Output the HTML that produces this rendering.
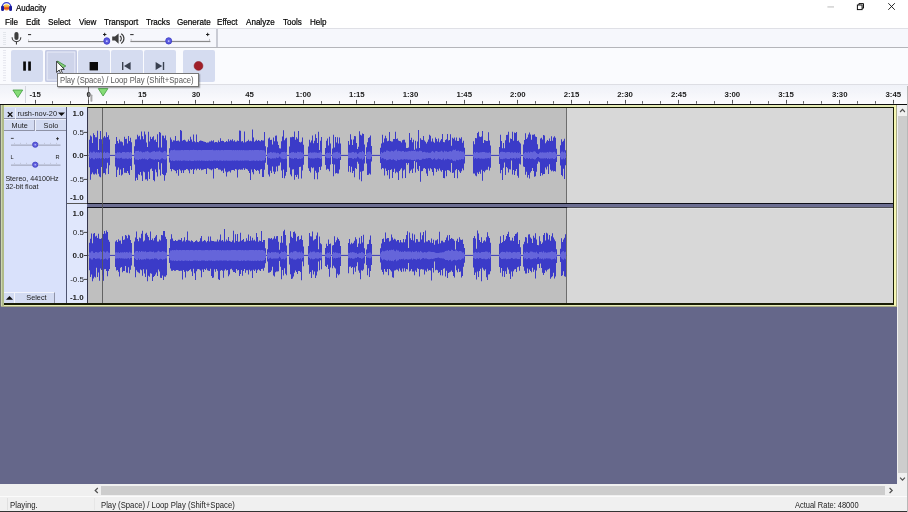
<!DOCTYPE html>
<html><head><meta charset="utf-8"><title>Audacity</title>
<style>
html,body{margin:0;padding:0}
body{width:908px;height:512px;overflow:hidden;background:#fff;position:relative;font-family:"Liberation Sans",sans-serif;color:#000}
.a{position:absolute}
.t{position:absolute;white-space:nowrap;line-height:1}
#title{left:15.5px;top:3.5px;font-size:8.6px;color:#000;-webkit-text-stroke:0.2px #000;transform:scaleX(.918);transform-origin:0 0}
.menu{top:17.7px;font-size:8.6px;color:#000;-webkit-text-stroke:0.2px #000;transform:scaleX(.94);transform-origin:0 0}
.btn{position:absolute;top:50px;height:32px;width:31.5px;background:#d5dcf0;border-radius:2px}
svg{position:absolute;left:0;top:0}
svg text{font-family:"Liberation Sans",sans-serif}
#root{position:absolute;left:0;top:0;width:908px;height:512px;overflow:hidden;will-change:transform;background:#fff}
</style></head><body><div id="root">

<!-- title bar -->
<svg width="908" height="16" viewBox="0 0 908 16">
 <defs><linearGradient id="ag" x1="0" y1="0" x2="0" y2="1"><stop offset="0" stop-color="#fbe060"/><stop offset="0.45" stop-color="#f6a030"/><stop offset="0.62" stop-color="#d42420"/><stop offset="0.78" stop-color="#ee7a28"/><stop offset="1" stop-color="#f4a040"/></linearGradient></defs>
 <circle cx="6.55" cy="7.3" r="3.1" fill="url(#ag)"/>
 <path d="M2.3 8 V6.9 A4.25 4.3 0 0 1 10.8 6.9 V8" fill="none" stroke="#3a40cc" stroke-width="1.3"/>
 <rect x="1.1" y="5.7" width="2.9" height="5.3" rx="1.3" fill="#1a1a9c"/>
 <rect x="9.1" y="5.7" width="2.9" height="5.3" rx="1.3" fill="#1a1a9c"/>
 <rect x="827.4" y="6.5" width="6.6" height="0.9" fill="#b4b4b4"/>
 <rect x="857.4" y="5" width="4.7" height="4.6" fill="none" stroke="#111" stroke-width="1"/>
 <path d="M858.9 5 V3.6 H863.5 V8.2 H862.1" fill="none" stroke="#111" stroke-width="1"/>
 <path d="M888.3 3.2 L894.8 9.8 M894.8 3.2 L888.3 9.8" stroke="#111" stroke-width="0.9" fill="none"/>
</svg>
<div class="t" id="title">Audacity</div>

<!-- menu -->
<div class="t menu" style="left:4.6px">File</div>
<div class="t menu" style="left:26px">Edit</div>
<div class="t menu" style="left:48px">Select</div>
<div class="t menu" style="left:79px">View</div>
<div class="t menu" style="left:104px">Transport</div>
<div class="t menu" style="left:146px">Tracks</div>
<div class="t menu" style="left:176.5px">Generate</div>
<div class="t menu" style="left:217px">Effect</div>
<div class="t menu" style="left:246px">Analyze</div>
<div class="t menu" style="left:283px">Tools</div>
<div class="t menu" style="left:310px">Help</div>

<!-- toolbar area -->
<div class="a" style="left:0;top:29px;width:908px;height:19px;background:#f6f7fc"></div>
<div class="a" style="left:0;top:48px;width:908px;height:38px;background:#fafbfe"></div>
<div class="a" style="left:0;top:28.2px;width:908px;height:0.8px;background:#dfe0e6"></div>
<div class="a" style="left:0;top:47.1px;width:908px;height:0.9px;background:#b4b5ba"></div>
<div class="a" style="left:215.5px;top:29.2px;width:0.7px;height:17.9px;background:#c9cbd4"></div>
<div class="a" style="left:217.1px;top:29.2px;width:0.7px;height:17.9px;background:#c9cbd4"></div>
<div class="a" style="left:0;top:84px;width:908px;height:0.9px;background:#dddee4"></div>

<!-- mixer toolbar -->
<svg width="230" height="48" viewBox="0 0 230 48">
 <g fill="#dcdee6"><rect x="3" y="32.0" width="3" height="0.7"/><rect x="3" y="34.0" width="3" height="0.7"/><rect x="3" y="36.0" width="3" height="0.7"/><rect x="3" y="38.0" width="3" height="0.7"/><rect x="3" y="40.0" width="3" height="0.7"/><rect x="3" y="42.0" width="3" height="0.7"/><rect x="3" y="44.0" width="3" height="0.7"/></g>
 <rect x="14.4" y="31.9" width="4.1" height="8.2" rx="2.05" fill="#3e3e3e"/>
 <path d="M12.1 37.3 A4.35 4.4 0 0 0 20.8 37.3" fill="none" stroke="#3e3e3e" stroke-width="1.1"/>
 <rect x="15.9" y="41.5" width="1.1" height="3" fill="#3e3e3e"/>
 <rect x="28" y="34.2" width="3.1" height="0.9" fill="#111"/>
 <rect x="103" y="34" width="3.4" height="0.9" fill="#111"/><rect x="104.25" y="32.8" width="0.9" height="3.3" fill="#111"/>
 <rect x="28" y="41.1" width="81.6" height="1" fill="#747474"/>
 <rect x="28" y="42.1" width="81.6" height="0.6" fill="#e2e2e6"/>
 <rect x="28" y="39.4" width="0.6" height="1.7" fill="#b0b0b0"/><rect x="109" y="39.4" width="0.6" height="1.7" fill="#b0b0b0"/>
 <ellipse cx="106.8" cy="41" rx="3" ry="3.3" fill="#5c5ce0" stroke="#3a3ac4" stroke-width="0.8"/>
 <circle cx="106.8" cy="41.2" r="0.9" fill="#c8c8ff"/>
 <path d="M112.2 36.6 H115 L118.6 33.4 V43.8 L115 40.6 H112.2 Z" fill="#3e3e3e"/>
 <path d="M120 36 A3.2 3.2 0 0 1 120 41.2" fill="none" stroke="#3e3e3e" stroke-width="1.2"/>
 <path d="M121.2 33.8 A5.6 5.6 0 0 1 121.2 43.4" fill="none" stroke="#3e3e3e" stroke-width="1.2"/>
 <rect x="130.2" y="34.2" width="3.4" height="0.9" fill="#111"/>
 <rect x="206" y="34" width="3.4" height="0.9" fill="#111"/><rect x="207.25" y="32.8" width="0.9" height="3.3" fill="#111"/>
 <rect x="130.4" y="40.9" width="80" height="1" fill="#747474"/>
 <rect x="130.4" y="41.9" width="80" height="0.6" fill="#e2e2e6"/>
 <rect x="130.8" y="38.9" width="0.6" height="2" fill="#a0a0a0"/><rect x="209.4" y="38.9" width="0.6" height="2" fill="#a0a0a0"/>
 <ellipse cx="168.7" cy="40.9" rx="3" ry="3.2" fill="#5c5ce0" stroke="#3a3ac4" stroke-width="0.8"/>
 <circle cx="168.7" cy="41.1" r="0.9" fill="#c8c8ff"/>
</svg>

<!-- transport -->
<div class="btn" style="left:11.3px"></div>
<div class="btn" style="left:45.2px;background:#ced4ea;box-shadow:inset 0 0 0 1.6px #c3c9e3, inset 0 0 0 2.6px #e9ecf8"></div>
<div class="btn" style="left:78.2px"></div>
<div class="btn" style="left:111.2px"></div>
<div class="btn" style="left:144.2px"></div>
<div class="btn" style="left:183.2px"></div>
<svg width="230" height="90" viewBox="0 0 230 90">
 <g fill="#e0e2ea"><rect x="3" y="50" width="3" height="0.8"/><rect x="3" y="52.5" width="3" height="0.8"/><rect x="3" y="55" width="3" height="0.8"/><rect x="3" y="57.5" width="3" height="0.8"/><rect x="3" y="60" width="3" height="0.8"/><rect x="3" y="62.5" width="3" height="0.8"/><rect x="3" y="65" width="3" height="0.8"/><rect x="3" y="67.5" width="3" height="0.8"/><rect x="3" y="70" width="3" height="0.8"/><rect x="3" y="72.5" width="3" height="0.8"/><rect x="3" y="75" width="3" height="0.8"/><rect x="3" y="77.5" width="3" height="0.8"/><rect x="3" y="80" width="3" height="0.8"/></g>
 <rect x="23.2" y="61.5" width="2.7" height="9.2" fill="#0a0a0a"/><rect x="28.2" y="61.5" width="2.7" height="9.2" fill="#0a0a0a"/>
 <path d="M57.5 61 L65.8 66 L57.5 71 Z" fill="#86cf7a" stroke="#3a8a3a" stroke-width="0.8"/>
 <rect x="89.6" y="62" width="8.4" height="8.4" fill="#0a0a0a"/>
 <rect x="122" y="62" width="1.4" height="8" fill="#3a4150"/><path d="M130.6 62 V70 L124 66 Z" fill="#3a4150"/>
 <path d="M155.6 62 V70 L162.2 66 Z" fill="#3a4150"/><rect x="162.8" y="62" width="1.4" height="8" fill="#3a4150"/>
 <circle cx="198.5" cy="65.9" r="4.4" fill="#a01f28" stroke="#8a1a22" stroke-width="0.6"/>
 <!-- mouse cursor -->
 <path d="M56.6 61.3 V72.4 L59.2 70 L61 74.2 L62.6 73.5 L60.8 69.4 H64.4 Z" fill="#fff" stroke="#111" stroke-width="0.8" stroke-linejoin="round"/>
</svg>
<!-- tooltip -->
<div class="a" style="left:56.5px;top:73px;width:142px;height:14px;background:#fff;border:1px solid #767676;box-sizing:border-box;box-shadow:0.8px 0.8px 1.2px rgba(0,0,0,.35);z-index:5"></div>
<div class="t" style="left:60.4px;top:75.6px;font-size:8.6px;color:#575757;transform:scaleX(.895);transform-origin:0 0;z-index:6">Play (Space) / Loop Play (Shift+Space)</div>

<!-- ruler -->
<div class="a" style="left:0;top:85px;width:908px;height:19px;background:linear-gradient(#f0f2f8,#f4f5fa 40%,#fcfcfe)"></div>
<div class="a" style="left:25.4px;top:85.5px;width:0.9px;height:17.7px;background:#d4d6de"></div>
<div class="a" style="left:0;top:103.5px;width:907px;height:1.6px;background:#0c0c0c"></div>
<svg width="908" height="106" viewBox="0 0 908 106" font-size="7.8" font-weight="bold" fill="#1c1c1c">
<rect x="35.1" y="99.9" width="0.8" height="3.8" fill="#2a2a2a"/>
<text x="35.1" y="97" text-anchor="middle">-15</text>
<rect x="52.1" y="101.1" width="0.8" height="2.6" fill="#3a3a3a"/>
<rect x="70.1" y="101.1" width="0.8" height="2.6" fill="#3a3a3a"/>
<rect x="88.1" y="99.9" width="0.8" height="3.8" fill="#2a2a2a"/>
<text x="88.7" y="97" text-anchor="middle">0</text>
<rect x="106.1" y="101.1" width="0.8" height="2.6" fill="#3a3a3a"/>
<rect x="124.1" y="101.1" width="0.8" height="2.6" fill="#3a3a3a"/>
<rect x="142.1" y="99.9" width="0.8" height="3.8" fill="#2a2a2a"/>
<text x="142.3" y="97" text-anchor="middle">15</text>
<rect x="160.1" y="101.1" width="0.8" height="2.6" fill="#3a3a3a"/>
<rect x="178.1" y="101.1" width="0.8" height="2.6" fill="#3a3a3a"/>
<rect x="195.1" y="99.9" width="0.8" height="3.8" fill="#2a2a2a"/>
<text x="196.0" y="97" text-anchor="middle">30</text>
<rect x="213.1" y="101.1" width="0.8" height="2.6" fill="#3a3a3a"/>
<rect x="231.1" y="101.1" width="0.8" height="2.6" fill="#3a3a3a"/>
<rect x="249.1" y="99.9" width="0.8" height="3.8" fill="#2a2a2a"/>
<text x="249.6" y="97" text-anchor="middle">45</text>
<rect x="267.1" y="101.1" width="0.8" height="2.6" fill="#3a3a3a"/>
<rect x="285.1" y="101.1" width="0.8" height="2.6" fill="#3a3a3a"/>
<rect x="303.1" y="99.9" width="0.8" height="3.8" fill="#2a2a2a"/>
<text x="303.3" y="97" text-anchor="middle">1:00</text>
<rect x="321.1" y="101.1" width="0.8" height="2.6" fill="#3a3a3a"/>
<rect x="339.1" y="101.1" width="0.8" height="2.6" fill="#3a3a3a"/>
<rect x="356.1" y="99.9" width="0.8" height="3.8" fill="#2a2a2a"/>
<text x="356.9" y="97" text-anchor="middle">1:15</text>
<rect x="374.1" y="101.1" width="0.8" height="2.6" fill="#3a3a3a"/>
<rect x="392.1" y="101.1" width="0.8" height="2.6" fill="#3a3a3a"/>
<rect x="410.1" y="99.9" width="0.8" height="3.8" fill="#2a2a2a"/>
<text x="410.5" y="97" text-anchor="middle">1:30</text>
<rect x="428.1" y="101.1" width="0.8" height="2.6" fill="#3a3a3a"/>
<rect x="446.1" y="101.1" width="0.8" height="2.6" fill="#3a3a3a"/>
<rect x="464.1" y="99.9" width="0.8" height="3.8" fill="#2a2a2a"/>
<text x="464.2" y="97" text-anchor="middle">1:45</text>
<rect x="482.1" y="101.1" width="0.8" height="2.6" fill="#3a3a3a"/>
<rect x="499.1" y="101.1" width="0.8" height="2.6" fill="#3a3a3a"/>
<rect x="517.1" y="99.9" width="0.8" height="3.8" fill="#2a2a2a"/>
<text x="517.8" y="97" text-anchor="middle">2:00</text>
<rect x="535.1" y="101.1" width="0.8" height="2.6" fill="#3a3a3a"/>
<rect x="553.1" y="101.1" width="0.8" height="2.6" fill="#3a3a3a"/>
<rect x="571.1" y="99.9" width="0.8" height="3.8" fill="#2a2a2a"/>
<text x="571.5" y="97" text-anchor="middle">2:15</text>
<rect x="589.1" y="101.1" width="0.8" height="2.6" fill="#3a3a3a"/>
<rect x="607.1" y="101.1" width="0.8" height="2.6" fill="#3a3a3a"/>
<rect x="625.1" y="99.9" width="0.8" height="3.8" fill="#2a2a2a"/>
<text x="625.1" y="97" text-anchor="middle">2:30</text>
<rect x="642.1" y="101.1" width="0.8" height="2.6" fill="#3a3a3a"/>
<rect x="660.1" y="101.1" width="0.8" height="2.6" fill="#3a3a3a"/>
<rect x="678.1" y="99.9" width="0.8" height="3.8" fill="#2a2a2a"/>
<text x="678.7" y="97" text-anchor="middle">2:45</text>
<rect x="696.1" y="101.1" width="0.8" height="2.6" fill="#3a3a3a"/>
<rect x="714.1" y="101.1" width="0.8" height="2.6" fill="#3a3a3a"/>
<rect x="732.1" y="99.9" width="0.8" height="3.8" fill="#2a2a2a"/>
<text x="732.4" y="97" text-anchor="middle">3:00</text>
<rect x="750.1" y="101.1" width="0.8" height="2.6" fill="#3a3a3a"/>
<rect x="768.1" y="101.1" width="0.8" height="2.6" fill="#3a3a3a"/>
<rect x="786.1" y="99.9" width="0.8" height="3.8" fill="#2a2a2a"/>
<text x="786.0" y="97" text-anchor="middle">3:15</text>
<rect x="803.1" y="101.1" width="0.8" height="2.6" fill="#3a3a3a"/>
<rect x="821.1" y="101.1" width="0.8" height="2.6" fill="#3a3a3a"/>
<rect x="839.1" y="99.9" width="0.8" height="3.8" fill="#2a2a2a"/>
<text x="839.7" y="97" text-anchor="middle">3:30</text>
<rect x="857.1" y="101.1" width="0.8" height="2.6" fill="#3a3a3a"/>
<rect x="875.1" y="101.1" width="0.8" height="2.6" fill="#3a3a3a"/>
<rect x="893.1" y="99.9" width="0.8" height="3.8" fill="#2a2a2a"/>
<text x="893.3" y="97" text-anchor="middle">3:45</text>
 <rect x="88.3" y="86.6" width="0.7" height="17" fill="#444"/>
 <path d="M12.9 90 H22.7 L17.8 97.5 Z" fill="#84dc76" stroke="#3f9a3c" stroke-width="0.8"/>
 <path d="M98.3 88.6 H107.9 L103.1 96 Z" fill="#84dc76" stroke="#3f9a3c" stroke-width="0.8"/>
 <rect x="90.4" y="94.5" width="2" height="7.2" rx="0.8" fill="#8c8c8c" opacity=".75"/>
</svg>

<!-- empty area -->
<div class="a" style="left:0;top:105px;width:896.7px;height:379.3px;background:#65678a"></div>

<!-- track -->
<div class="a" style="left:0;top:105px;width:1px;height:201.4px;background:#73756f"></div>
<div class="a" style="left:0.9px;top:105px;width:895.8px;height:201.5px;background:#a9ab86"></div>
<div class="a" style="left:0.9px;top:105px;width:894.9px;height:201.2px;background:#e6ecb6"></div>
<div class="a" style="left:0.9px;top:105px;width:1px;height:201.2px;background:#ccd6b2"></div>
<div class="a" style="left:1.9px;top:105px;width:2.1px;height:201.2px;background:#b0bb8a"></div>
<div class="a" style="left:893.9px;top:105px;width:1.9px;height:201.2px;background:#f5f6b2"></div>
<div class="a" style="left:4px;top:107px;width:889.9px;height:197.7px;background:#181c04"></div>
<div class="a" style="left:4px;top:107.4px;width:62.8px;height:195.8px;background:#d9e1fb"></div>
<!-- vruler -->
<div class="a" style="left:66.3px;top:107.4px;width:21px;height:195.8px;background:#e0e7fc;border-left:1px solid #4e5470;box-sizing:border-box"></div>
<!-- wave bg -->
<div class="a" style="left:87.3px;top:108px;width:805.6px;height:195.2px;background:#d8d8d8"></div>
<div class="a" style="left:87.3px;top:108px;width:479.2px;height:195.2px;background:#bfbfbf"></div>
<div class="a" style="left:566.3px;top:108px;width:0.9px;height:195.2px;background:#6d6d6d"></div>
<div class="a" style="left:87.3px;top:107.4px;width:1.1px;height:195.8px;background:#33334a"></div>
<!-- separator -->
<div class="a" style="left:66.5px;top:203.3px;width:21px;height:0.9px;background:#555"></div>
<div class="a" style="left:87.3px;top:202.9px;width:805.6px;height:4.8px;background:#6c6e92;border-top:1px solid #0e0e18;border-bottom:1px solid #0e0e18;box-sizing:border-box"></div>
<svg width="908" height="320" viewBox="0 0 908 320">
 <rect x="88.4" y="154.9" width="478" height="1" fill="#3a3ab8"/>
 <rect x="88.4" y="254.9" width="478" height="1" fill="#3a3ab8"/>
 <rect x="567.2" y="207.7" width="325.7" height="0.8" fill="#ececec"/>
 <path d="M89.00 139.7h1.00v27.6h-1.00zM90.00 135.5h1.00v44.3h-1.00zM91.00 136.6h1.00v37.7h-1.00zM92.00 142.9h1.00v29.6h-1.00zM93.00 133.2h1.00v41.1h-1.00zM94.00 135.1h1.00v39.4h-1.00zM95.00 137.3h1.00v36.3h-1.00zM96.00 137.2h1.00v37.4h-1.00zM97.00 130.8h1.00v38.2h-1.00zM98.00 150.0h1.00v23.7h-1.00zM99.00 138.9h1.00v37.7h-1.00zM100.00 131.1h1.00v46.1h-1.00zM101.00 139.3h1.00v27.8h-1.00zM102.00 144.1h1.00v32.3h-1.00zM103.00 137.5h1.00v35.8h-1.00zM104.00 135.9h1.00v37.0h-1.00zM105.00 137.6h1.00v37.0h-1.00zM106.00 132.2h1.00v36.2h-1.00zM107.00 137.0h1.00v25.8h-1.00zM108.00 135.2h1.00v38.7h-1.00zM109.00 139.5h1.00v25.8h-1.00zM115.00 144.1h1.00v22.3h-1.00zM116.00 137.1h1.00v39.9h-1.00zM117.00 141.1h1.00v28.6h-1.00zM118.00 143.2h1.00v24.3h-1.00zM119.00 139.4h1.00v35.6h-1.00zM120.00 141.4h1.00v28.0h-1.00zM121.00 141.6h1.00v33.8h-1.00zM122.00 142.2h1.00v32.2h-1.00zM123.00 145.6h1.00v22.5h-1.00zM124.00 136.8h1.00v35.9h-1.00zM125.00 139.0h1.00v33.8h-1.00zM126.00 138.8h1.00v34.3h-1.00zM127.00 143.6h1.00v27.5h-1.00zM128.00 136.1h1.00v37.2h-1.00zM129.00 140.9h1.00v34.1h-1.00zM130.00 137.8h1.00v28.1h-1.00zM131.00 142.3h1.00v27.8h-1.00zM134.00 146.3h1.00v18.2h-1.00zM135.00 139.4h1.00v41.4h-1.00zM136.00 139.3h1.00v38.4h-1.00zM137.00 134.7h1.00v45.4h-1.00zM138.00 136.5h1.00v37.8h-1.00zM139.00 135.8h1.00v39.2h-1.00zM140.00 139.4h1.00v32.6h-1.00zM141.00 131.6h1.00v44.0h-1.00zM142.00 136.3h1.00v44.8h-1.00zM143.00 139.2h1.00v32.4h-1.00zM144.00 131.5h1.00v40.8h-1.00zM145.00 134.6h1.00v44.8h-1.00zM146.00 142.6h1.00v36.6h-1.00zM147.00 147.0h1.00v33.7h-1.00zM148.00 131.7h1.00v40.1h-1.00zM149.00 141.6h1.00v37.5h-1.00zM150.00 136.7h1.00v32.5h-1.00zM151.00 139.0h1.00v29.5h-1.00zM152.00 137.3h1.00v33.6h-1.00zM153.00 136.3h1.00v43.6h-1.00zM154.00 140.3h1.00v41.0h-1.00zM155.00 139.6h1.00v29.8h-1.00zM156.00 142.0h1.00v30.3h-1.00zM157.00 134.2h1.00v42.4h-1.00zM158.00 147.6h1.00v14.3h-1.00zM159.00 131.9h1.00v37.5h-1.00zM160.00 132.8h1.00v42.6h-1.00zM161.00 147.6h1.00v15.7h-1.00zM162.00 135.4h1.00v38.5h-1.00zM163.00 135.8h1.00v39.2h-1.00zM164.00 138.3h1.00v42.4h-1.00zM165.00 135.5h1.00v39.7h-1.00zM166.00 140.2h1.00v32.5h-1.00zM169.00 148.3h1.00v14.1h-1.00zM170.00 137.6h1.00v31.4h-1.00zM171.00 139.5h1.00v31.7h-1.00zM172.00 141.7h1.00v27.3h-1.00zM173.00 140.2h1.00v29.5h-1.00zM174.00 140.6h1.00v29.6h-1.00zM175.00 136.1h1.00v34.8h-1.00zM176.00 141.1h1.00v32.2h-1.00zM177.00 140.8h1.00v29.2h-1.00zM178.00 140.4h1.00v35.4h-1.00zM179.00 141.4h1.00v27.8h-1.00zM180.00 130.0h1.00v40.6h-1.00zM181.00 130.8h1.00v42.1h-1.00zM182.00 140.7h1.00v29.5h-1.00zM183.00 140.1h1.00v33.0h-1.00zM184.00 139.8h1.00v30.5h-1.00zM185.00 140.6h1.00v29.5h-1.00zM186.00 141.8h1.00v27.3h-1.00zM187.00 141.5h1.00v27.8h-1.00zM188.00 139.6h1.00v30.9h-1.00zM189.00 141.0h1.00v32.2h-1.00zM190.00 136.8h1.00v32.4h-1.00zM191.00 139.5h1.00v30.6h-1.00zM192.00 141.8h1.00v27.1h-1.00zM193.00 134.4h1.00v39.5h-1.00zM194.00 141.2h1.00v28.5h-1.00zM195.00 142.3h1.00v26.4h-1.00zM196.00 134.6h1.00v35.7h-1.00zM197.00 142.1h1.00v26.7h-1.00zM198.00 142.2h1.00v26.6h-1.00zM199.00 140.9h1.00v29.0h-1.00zM200.00 140.4h1.00v28.4h-1.00zM201.00 140.7h1.00v29.6h-1.00zM202.00 141.1h1.00v28.6h-1.00zM203.00 141.4h1.00v28.0h-1.00zM204.00 141.8h1.00v27.2h-1.00zM205.00 141.9h1.00v27.0h-1.00zM206.00 142.7h1.00v31.3h-1.00zM207.00 142.5h1.00v25.7h-1.00zM208.00 142.4h1.00v26.1h-1.00zM209.00 141.5h1.00v27.8h-1.00zM210.00 141.4h1.00v28.0h-1.00zM211.00 140.5h1.00v29.8h-1.00zM212.00 141.3h1.00v28.0h-1.00zM213.00 140.2h1.00v38.3h-1.00zM214.00 142.4h1.00v26.0h-1.00zM215.00 141.9h1.00v27.0h-1.00zM216.00 142.1h1.00v26.0h-1.00zM217.00 142.4h1.00v25.7h-1.00zM218.00 140.6h1.00v28.9h-1.00zM219.00 141.9h1.00v27.5h-1.00zM220.00 138.2h1.00v31.6h-1.00zM221.00 141.1h1.00v30.1h-1.00zM222.00 140.8h1.00v29.7h-1.00zM223.00 141.0h1.00v31.9h-1.00zM224.00 142.2h1.00v26.3h-1.00zM225.00 141.9h1.00v29.5h-1.00zM226.00 140.9h1.00v35.6h-1.00zM227.00 141.8h1.00v30.4h-1.00zM228.00 139.2h1.00v32.3h-1.00zM229.00 141.2h1.00v30.0h-1.00zM230.00 139.8h1.00v32.7h-1.00zM231.00 140.6h1.00v29.6h-1.00zM232.00 139.2h1.00v30.9h-1.00zM233.00 141.3h1.00v28.6h-1.00zM234.00 140.2h1.00v30.5h-1.00zM235.00 141.8h1.00v27.1h-1.00zM236.00 141.4h1.00v28.0h-1.00zM237.00 140.4h1.00v37.2h-1.00zM238.00 141.0h1.00v28.8h-1.00zM239.00 130.4h1.00v38.8h-1.00zM240.00 130.8h1.00v38.9h-1.00zM241.00 141.4h1.00v28.0h-1.00zM242.00 141.1h1.00v28.7h-1.00zM243.00 142.4h1.00v25.9h-1.00zM244.00 131.4h1.00v38.6h-1.00zM245.00 142.3h1.00v26.1h-1.00zM246.00 141.6h1.00v27.3h-1.00zM247.00 141.1h1.00v28.5h-1.00zM248.00 139.8h1.00v31.1h-1.00zM249.00 141.3h1.00v31.7h-1.00zM250.00 140.8h1.00v39.3h-1.00zM251.00 141.3h1.00v28.2h-1.00zM252.00 129.4h1.00v42.9h-1.00zM253.00 137.6h1.00v36.6h-1.00zM254.00 141.7h1.00v27.3h-1.00zM255.00 140.7h1.00v29.4h-1.00zM256.00 139.8h1.00v31.1h-1.00zM257.00 140.9h1.00v29.1h-1.00zM258.00 140.1h1.00v30.6h-1.00zM259.00 140.7h1.00v33.1h-1.00zM260.00 141.3h1.00v28.3h-1.00zM261.00 140.1h1.00v29.0h-1.00zM262.00 140.4h1.00v36.7h-1.00zM263.00 140.5h1.00v36.4h-1.00zM264.00 132.0h1.00v37.7h-1.00zM265.00 146.3h1.00v16.4h-1.00zM267.00 147.3h1.00v17.5h-1.00zM268.00 138.6h1.00v36.0h-1.00zM269.00 137.5h1.00v39.1h-1.00zM270.00 139.9h1.00v30.9h-1.00zM271.00 139.8h1.00v33.1h-1.00zM272.00 144.4h1.00v22.1h-1.00zM273.00 137.6h1.00v33.8h-1.00zM274.00 141.3h1.00v32.7h-1.00zM275.00 135.8h1.00v36.0h-1.00zM276.00 135.4h1.00v31.0h-1.00zM277.00 141.4h1.00v29.9h-1.00zM278.00 144.9h1.00v20.9h-1.00zM279.00 148.3h1.00v17.2h-1.00zM280.00 148.4h1.00v14.0h-1.00zM281.00 141.2h1.00v29.2h-1.00zM282.00 136.6h1.00v41.4h-1.00zM283.00 130.3h1.00v39.2h-1.00zM284.00 140.2h1.00v38.1h-1.00zM285.00 138.5h1.00v37.2h-1.00zM286.00 137.8h1.00v34.3h-1.00zM289.00 146.6h1.00v20.9h-1.00zM290.00 137.3h1.00v37.1h-1.00zM291.00 137.2h1.00v39.0h-1.00zM292.00 136.7h1.00v32.9h-1.00zM293.00 136.9h1.00v32.3h-1.00zM294.00 131.4h1.00v48.4h-1.00zM295.00 139.7h1.00v35.4h-1.00zM296.00 137.2h1.00v39.9h-1.00zM297.00 138.8h1.00v36.0h-1.00zM298.00 131.0h1.00v47.8h-1.00zM299.00 141.9h1.00v25.1h-1.00zM300.00 142.6h1.00v24.1h-1.00zM301.00 141.7h1.00v36.7h-1.00zM302.00 137.6h1.00v32.9h-1.00zM303.00 144.8h1.00v20.0h-1.00zM308.00 146.5h1.00v21.8h-1.00zM309.00 139.8h1.00v31.3h-1.00zM310.00 142.5h1.00v29.9h-1.00zM311.00 140.6h1.00v26.7h-1.00zM312.00 135.4h1.00v32.9h-1.00zM313.00 143.2h1.00v24.2h-1.00zM314.00 140.8h1.00v38.5h-1.00zM315.00 134.3h1.00v36.4h-1.00zM316.00 138.1h1.00v34.7h-1.00zM317.00 143.0h1.00v36.3h-1.00zM318.00 131.7h1.00v40.6h-1.00zM319.00 149.9h1.00v17.1h-1.00zM320.00 140.8h1.00v29.2h-1.00zM321.00 137.0h1.00v29.5h-1.00zM325.00 148.0h1.00v17.0h-1.00zM326.00 140.7h1.00v29.0h-1.00zM327.00 138.6h1.00v30.2h-1.00zM328.00 145.4h1.00v23.9h-1.00zM329.00 136.7h1.00v34.5h-1.00zM330.00 143.4h1.00v21.2h-1.00zM332.00 148.6h1.00v15.5h-1.00zM333.00 134.8h1.00v41.5h-1.00zM334.00 147.4h1.00v17.2h-1.00zM335.00 137.1h1.00v36.5h-1.00zM336.00 142.5h1.00v30.4h-1.00zM337.00 137.2h1.00v36.4h-1.00zM338.00 143.6h1.00v29.8h-1.00zM339.00 137.5h1.00v31.9h-1.00zM340.00 143.6h1.00v16.3h-1.00zM348.00 141.1h1.00v30.7h-1.00zM349.00 144.8h1.00v21.3h-1.00zM350.00 134.2h1.00v38.1h-1.00zM351.00 139.4h1.00v27.4h-1.00zM352.00 145.1h1.00v28.0h-1.00zM353.00 139.6h1.00v31.5h-1.00zM354.00 136.1h1.00v41.2h-1.00zM355.00 136.2h1.00v31.8h-1.00zM356.00 143.1h1.00v25.8h-1.00zM357.00 149.0h1.00v12.7h-1.00zM358.00 146.8h1.00v17.0h-1.00zM359.00 131.2h1.00v48.2h-1.00zM360.00 134.8h1.00v37.0h-1.00zM361.00 135.4h1.00v45.8h-1.00zM362.00 133.4h1.00v37.9h-1.00zM363.00 133.9h1.00v36.9h-1.00zM364.00 144.4h1.00v19.2h-1.00zM366.00 147.3h1.00v16.2h-1.00zM367.00 142.3h1.00v32.7h-1.00zM368.00 137.9h1.00v36.9h-1.00zM369.00 137.2h1.00v36.4h-1.00zM370.00 135.6h1.00v38.8h-1.00zM371.00 145.9h1.00v15.7h-1.00zM380.00 147.8h1.00v15.3h-1.00zM381.00 143.4h1.00v25.9h-1.00zM382.00 134.7h1.00v33.2h-1.00zM383.00 142.4h1.00v26.0h-1.00zM384.00 138.5h1.00v36.9h-1.00zM385.00 135.7h1.00v32.9h-1.00zM386.00 138.3h1.00v32.7h-1.00zM387.00 141.3h1.00v33.9h-1.00zM388.00 140.7h1.00v29.4h-1.00zM389.00 131.9h1.00v46.8h-1.00zM390.00 140.9h1.00v29.1h-1.00zM391.00 141.4h1.00v27.9h-1.00zM392.00 141.5h1.00v36.6h-1.00zM393.00 138.9h1.00v33.0h-1.00zM394.00 138.9h1.00v29.9h-1.00zM395.00 131.7h1.00v41.6h-1.00zM396.00 139.1h1.00v32.7h-1.00zM397.00 138.4h1.00v34.0h-1.00zM398.00 140.5h1.00v39.6h-1.00zM399.00 140.9h1.00v30.2h-1.00zM400.00 141.3h1.00v28.1h-1.00zM401.00 142.5h1.00v25.8h-1.00zM402.00 140.2h1.00v38.0h-1.00zM403.00 139.8h1.00v30.6h-1.00zM404.00 139.7h1.00v29.7h-1.00zM405.00 142.5h1.00v35.5h-1.00zM406.00 147.9h1.00v15.0h-1.00zM407.00 148.0h1.00v16.8h-1.00zM408.00 147.6h1.00v15.5h-1.00zM409.00 132.9h1.00v40.3h-1.00zM410.00 140.0h1.00v30.7h-1.00zM411.00 137.7h1.00v31.9h-1.00zM412.00 142.3h1.00v30.8h-1.00zM413.00 139.8h1.00v28.6h-1.00zM414.00 149.7h1.00v11.4h-1.00zM415.00 140.7h1.00v31.9h-1.00zM416.00 148.6h1.00v13.7h-1.00zM417.00 141.5h1.00v27.8h-1.00zM418.00 130.0h1.00v41.0h-1.00zM419.00 148.0h1.00v18.1h-1.00zM420.00 138.2h1.00v43.6h-1.00zM421.00 139.7h1.00v31.5h-1.00zM422.00 139.9h1.00v31.0h-1.00zM423.00 136.0h1.00v32.6h-1.00zM424.00 140.5h1.00v27.4h-1.00zM425.00 141.8h1.00v27.1h-1.00zM426.00 143.6h1.00v29.9h-1.00zM427.00 141.8h1.00v34.2h-1.00zM428.00 139.4h1.00v29.1h-1.00zM429.00 134.8h1.00v36.0h-1.00zM430.00 135.7h1.00v32.6h-1.00zM431.00 141.6h1.00v27.6h-1.00zM432.00 138.6h1.00v33.5h-1.00zM433.00 141.8h1.00v33.6h-1.00zM434.00 142.7h1.00v25.4h-1.00zM435.00 137.4h1.00v31.3h-1.00zM436.00 138.9h1.00v33.0h-1.00zM437.00 141.5h1.00v27.8h-1.00zM438.00 138.5h1.00v32.3h-1.00zM439.00 142.2h1.00v26.4h-1.00zM440.00 140.4h1.00v30.1h-1.00zM441.00 138.9h1.00v32.8h-1.00zM442.00 134.1h1.00v35.8h-1.00zM443.00 142.1h1.00v35.9h-1.00zM444.00 142.3h1.00v36.0h-1.00zM445.00 140.0h1.00v30.7h-1.00zM446.00 139.2h1.00v37.0h-1.00zM447.00 134.1h1.00v36.0h-1.00zM448.00 140.4h1.00v29.9h-1.00zM449.00 139.9h1.00v30.9h-1.00zM450.00 134.2h1.00v38.1h-1.00zM451.00 145.7h1.00v17.4h-1.00zM452.00 137.7h1.00v35.3h-1.00zM453.00 138.7h1.00v33.8h-1.00zM454.00 137.4h1.00v40.6h-1.00zM455.00 140.5h1.00v29.7h-1.00zM456.00 137.6h1.00v31.5h-1.00zM457.00 141.1h1.00v37.2h-1.00zM458.00 140.9h1.00v29.0h-1.00zM459.00 137.7h1.00v33.9h-1.00zM460.00 138.7h1.00v34.3h-1.00zM461.00 137.2h1.00v34.1h-1.00zM462.00 142.8h1.00v25.6h-1.00zM463.00 140.7h1.00v29.5h-1.00zM464.00 147.8h1.00v15.7h-1.00zM473.00 141.2h1.00v32.2h-1.00zM474.00 144.3h1.00v29.2h-1.00zM475.00 137.9h1.00v37.5h-1.00zM476.00 138.2h1.00v38.0h-1.00zM477.00 133.0h1.00v39.5h-1.00zM478.00 131.8h1.00v42.2h-1.00zM479.00 136.6h1.00v35.1h-1.00zM480.00 136.9h1.00v36.8h-1.00zM481.00 136.4h1.00v33.3h-1.00zM482.00 131.1h1.00v49.6h-1.00zM483.00 143.1h1.00v28.0h-1.00zM484.00 140.1h1.00v32.2h-1.00zM485.00 140.5h1.00v29.9h-1.00zM486.00 140.9h1.00v28.9h-1.00zM487.00 140.9h1.00v28.9h-1.00zM488.00 132.3h1.00v34.5h-1.00zM489.00 140.4h1.00v30.0h-1.00zM490.00 145.5h1.00v22.3h-1.00zM499.00 146.9h1.00v17.0h-1.00zM500.00 134.8h1.00v38.4h-1.00zM501.00 140.9h1.00v29.0h-1.00zM502.00 148.2h1.00v31.8h-1.00zM503.00 143.1h1.00v24.6h-1.00zM504.00 148.2h1.00v14.3h-1.00zM505.00 140.2h1.00v34.9h-1.00zM506.00 135.0h1.00v32.0h-1.00zM507.00 134.7h1.00v33.5h-1.00zM508.00 131.7h1.00v40.7h-1.00zM509.00 142.4h1.00v26.9h-1.00zM510.00 138.6h1.00v30.9h-1.00zM511.00 139.1h1.00v21.3h-1.00zM512.00 131.8h1.00v42.8h-1.00zM513.00 140.7h1.00v29.4h-1.00zM514.00 132.6h1.00v42.3h-1.00zM515.00 133.1h1.00v38.0h-1.00zM516.00 131.9h1.00v37.1h-1.00zM517.00 140.9h1.00v34.8h-1.00zM518.00 140.4h1.00v37.4h-1.00zM519.00 142.3h1.00v21.4h-1.00zM520.00 143.5h1.00v21.0h-1.00zM523.00 144.4h1.00v22.1h-1.00zM524.00 140.1h1.00v27.0h-1.00zM525.00 133.2h1.00v41.6h-1.00zM526.00 139.0h1.00v32.8h-1.00zM527.00 137.5h1.00v40.0h-1.00zM528.00 134.4h1.00v40.5h-1.00zM529.00 132.6h1.00v46.0h-1.00zM530.00 134.5h1.00v38.0h-1.00zM531.00 139.8h1.00v31.1h-1.00zM532.00 134.8h1.00v33.1h-1.00zM533.00 134.7h1.00v36.4h-1.00zM534.00 134.2h1.00v42.5h-1.00zM535.00 136.4h1.00v39.8h-1.00zM536.00 137.1h1.00v34.7h-1.00zM537.00 144.3h1.00v19.5h-1.00zM538.00 149.3h1.00v12.1h-1.00zM539.00 148.7h1.00v13.5h-1.00zM540.00 138.5h1.00v37.6h-1.00zM541.00 137.7h1.00v35.4h-1.00zM542.00 139.5h1.00v35.8h-1.00zM543.00 134.9h1.00v39.1h-1.00zM544.00 135.4h1.00v38.6h-1.00zM545.00 143.3h1.00v24.3h-1.00zM546.00 141.4h1.00v28.1h-1.00zM547.00 140.1h1.00v26.4h-1.00zM548.00 141.1h1.00v32.8h-1.00zM549.00 138.4h1.00v25.8h-1.00zM550.00 141.0h1.00v28.8h-1.00zM551.00 136.2h1.00v35.1h-1.00zM552.00 140.7h1.00v29.9h-1.00zM553.00 137.5h1.00v34.0h-1.00zM554.00 136.3h1.00v34.7h-1.00zM555.00 137.8h1.00v33.7h-1.00zM556.00 148.8h1.00v13.3h-1.00zM560.00 145.2h1.00v20.2h-1.00zM561.00 139.2h1.00v35.8h-1.00zM562.00 141.7h1.00v34.6h-1.00zM563.00 140.8h1.00v27.9h-1.00zM564.00 138.8h1.00v40.1h-1.00zM565.00 150.3h1.00v15.0h-1.00z" fill="#3b3bc8"/>
 <path d="M89.00 153.2h1.00v4.4h-1.00zM90.00 151.7h1.00v7.3h-1.00zM91.00 152.6h1.00v5.5h-1.00zM92.00 152.4h1.00v5.9h-1.00zM93.00 151.6h1.00v7.7h-1.00zM94.00 151.7h1.00v7.5h-1.00zM95.00 152.8h1.00v5.2h-1.00zM96.00 152.0h1.00v6.8h-1.00zM97.00 152.6h1.00v5.6h-1.00zM98.00 152.3h1.00v6.3h-1.00zM99.00 152.7h1.00v5.4h-1.00zM100.00 151.9h1.00v6.9h-1.00zM101.00 152.5h1.00v5.7h-1.00zM102.00 152.5h1.00v5.7h-1.00zM103.00 152.8h1.00v5.2h-1.00zM104.00 151.8h1.00v7.2h-1.00zM105.00 153.0h1.00v4.9h-1.00zM106.00 152.5h1.00v5.8h-1.00zM107.00 152.2h1.00v6.4h-1.00zM108.00 152.8h1.00v5.2h-1.00zM109.00 153.3h1.00v4.3h-1.00zM115.00 153.0h1.00v4.8h-1.00zM116.00 153.2h1.00v4.5h-1.00zM117.00 152.3h1.00v6.2h-1.00zM118.00 152.6h1.00v5.6h-1.00zM119.00 152.3h1.00v6.2h-1.00zM120.00 152.7h1.00v5.4h-1.00zM121.00 153.1h1.00v4.7h-1.00zM122.00 151.9h1.00v6.9h-1.00zM123.00 152.0h1.00v6.7h-1.00zM124.00 152.1h1.00v6.6h-1.00zM125.00 152.4h1.00v6.1h-1.00zM126.00 152.3h1.00v6.2h-1.00zM127.00 151.9h1.00v7.1h-1.00zM128.00 152.1h1.00v6.7h-1.00zM129.00 152.6h1.00v5.6h-1.00zM130.00 152.0h1.00v6.9h-1.00zM131.00 152.7h1.00v5.4h-1.00zM134.00 153.0h1.00v4.8h-1.00zM135.00 151.2h1.00v8.3h-1.00zM136.00 151.1h1.00v8.5h-1.00zM137.00 151.1h1.00v8.6h-1.00zM138.00 150.8h1.00v9.2h-1.00zM139.00 151.8h1.00v7.2h-1.00zM140.00 151.2h1.00v8.4h-1.00zM141.00 151.8h1.00v7.1h-1.00zM142.00 152.4h1.00v6.0h-1.00zM143.00 151.9h1.00v7.1h-1.00zM144.00 152.2h1.00v6.4h-1.00zM145.00 151.6h1.00v7.6h-1.00zM146.00 151.5h1.00v7.8h-1.00zM147.00 150.9h1.00v9.0h-1.00zM148.00 151.7h1.00v7.4h-1.00zM149.00 152.5h1.00v5.8h-1.00zM150.00 152.5h1.00v5.9h-1.00zM151.00 151.9h1.00v7.0h-1.00zM152.00 151.6h1.00v7.6h-1.00zM153.00 151.3h1.00v8.1h-1.00zM154.00 151.0h1.00v8.7h-1.00zM155.00 151.9h1.00v7.0h-1.00zM156.00 151.4h1.00v8.0h-1.00zM157.00 151.5h1.00v7.8h-1.00zM158.00 151.5h1.00v7.8h-1.00zM159.00 150.8h1.00v9.1h-1.00zM160.00 151.7h1.00v7.5h-1.00zM161.00 152.2h1.00v6.4h-1.00zM162.00 152.5h1.00v5.8h-1.00zM163.00 151.7h1.00v7.3h-1.00zM164.00 151.1h1.00v8.5h-1.00zM165.00 151.2h1.00v8.4h-1.00zM166.00 152.4h1.00v6.0h-1.00zM169.00 152.8h1.00v5.2h-1.00zM170.00 150.6h1.00v9.6h-1.00zM171.00 150.0h1.00v10.9h-1.00zM172.00 150.2h1.00v10.3h-1.00zM173.00 149.9h1.00v11.0h-1.00zM174.00 149.8h1.00v11.1h-1.00zM175.00 150.3h1.00v10.1h-1.00zM176.00 150.3h1.00v10.1h-1.00zM177.00 150.2h1.00v10.5h-1.00zM178.00 150.2h1.00v10.4h-1.00zM179.00 150.2h1.00v10.5h-1.00zM180.00 150.3h1.00v10.1h-1.00zM181.00 149.9h1.00v11.1h-1.00zM182.00 150.0h1.00v10.7h-1.00zM183.00 150.3h1.00v10.2h-1.00zM184.00 150.1h1.00v10.5h-1.00zM185.00 150.0h1.00v10.8h-1.00zM186.00 150.0h1.00v10.7h-1.00zM187.00 150.1h1.00v10.7h-1.00zM188.00 149.9h1.00v11.0h-1.00zM189.00 150.3h1.00v10.2h-1.00zM190.00 150.0h1.00v10.7h-1.00zM191.00 149.9h1.00v11.0h-1.00zM192.00 150.0h1.00v10.9h-1.00zM193.00 149.8h1.00v11.1h-1.00zM194.00 150.1h1.00v10.5h-1.00zM195.00 150.1h1.00v10.7h-1.00zM196.00 150.0h1.00v10.8h-1.00zM197.00 150.2h1.00v10.4h-1.00zM198.00 150.0h1.00v10.8h-1.00zM199.00 150.1h1.00v10.5h-1.00zM200.00 149.9h1.00v11.0h-1.00zM201.00 150.3h1.00v10.3h-1.00zM202.00 150.1h1.00v10.7h-1.00zM203.00 150.1h1.00v10.6h-1.00zM204.00 149.9h1.00v10.9h-1.00zM205.00 150.0h1.00v10.9h-1.00zM206.00 150.0h1.00v10.8h-1.00zM207.00 150.0h1.00v10.9h-1.00zM208.00 150.1h1.00v10.6h-1.00zM209.00 150.1h1.00v10.5h-1.00zM210.00 149.9h1.00v11.0h-1.00zM211.00 150.0h1.00v10.8h-1.00zM212.00 149.8h1.00v11.1h-1.00zM213.00 150.3h1.00v10.1h-1.00zM214.00 150.3h1.00v10.3h-1.00zM215.00 150.3h1.00v10.1h-1.00zM216.00 150.0h1.00v10.7h-1.00zM217.00 150.2h1.00v10.4h-1.00zM218.00 149.9h1.00v11.0h-1.00zM219.00 150.3h1.00v10.1h-1.00zM220.00 150.2h1.00v10.4h-1.00zM221.00 149.9h1.00v10.9h-1.00zM222.00 149.9h1.00v11.0h-1.00zM223.00 150.3h1.00v10.2h-1.00zM224.00 149.9h1.00v10.9h-1.00zM225.00 150.1h1.00v10.6h-1.00zM226.00 150.1h1.00v10.5h-1.00zM227.00 150.1h1.00v10.6h-1.00zM228.00 150.1h1.00v10.6h-1.00zM229.00 150.1h1.00v10.6h-1.00zM230.00 150.0h1.00v10.8h-1.00zM231.00 149.9h1.00v10.9h-1.00zM232.00 150.2h1.00v10.4h-1.00zM233.00 150.0h1.00v10.8h-1.00zM234.00 150.2h1.00v10.4h-1.00zM235.00 150.0h1.00v10.8h-1.00zM236.00 150.3h1.00v10.2h-1.00zM237.00 150.1h1.00v10.5h-1.00zM238.00 150.2h1.00v10.5h-1.00zM239.00 149.9h1.00v10.9h-1.00zM240.00 150.3h1.00v10.2h-1.00zM241.00 150.0h1.00v10.7h-1.00zM242.00 150.2h1.00v10.4h-1.00zM243.00 150.1h1.00v10.6h-1.00zM244.00 150.3h1.00v10.3h-1.00zM245.00 150.2h1.00v10.4h-1.00zM246.00 150.3h1.00v10.2h-1.00zM247.00 150.2h1.00v10.4h-1.00zM248.00 150.3h1.00v10.2h-1.00zM249.00 149.9h1.00v11.0h-1.00zM250.00 149.9h1.00v11.1h-1.00zM251.00 150.2h1.00v10.5h-1.00zM252.00 150.1h1.00v10.7h-1.00zM253.00 150.3h1.00v10.1h-1.00zM254.00 150.1h1.00v10.6h-1.00zM255.00 150.0h1.00v10.9h-1.00zM256.00 150.1h1.00v10.5h-1.00zM257.00 150.1h1.00v10.6h-1.00zM258.00 149.9h1.00v11.0h-1.00zM259.00 150.3h1.00v10.1h-1.00zM260.00 150.0h1.00v10.8h-1.00zM261.00 149.9h1.00v11.0h-1.00zM262.00 150.2h1.00v10.3h-1.00zM263.00 150.3h1.00v10.2h-1.00zM264.00 150.4h1.00v9.9h-1.00zM265.00 152.6h1.00v5.5h-1.00zM267.00 153.7h1.00v3.4h-1.00zM268.00 152.7h1.00v5.5h-1.00zM269.00 152.8h1.00v5.2h-1.00zM270.00 152.0h1.00v6.8h-1.00zM271.00 152.2h1.00v6.5h-1.00zM272.00 152.7h1.00v5.5h-1.00zM273.00 152.3h1.00v6.3h-1.00zM274.00 152.5h1.00v5.8h-1.00zM275.00 152.4h1.00v6.0h-1.00zM276.00 153.3h1.00v4.2h-1.00zM277.00 152.7h1.00v5.4h-1.00zM278.00 153.0h1.00v4.8h-1.00zM279.00 154.2h1.00v2.4h-1.00zM280.00 153.4h1.00v4.0h-1.00zM281.00 152.2h1.00v6.4h-1.00zM282.00 152.0h1.00v6.8h-1.00zM283.00 151.9h1.00v7.1h-1.00zM284.00 151.8h1.00v7.3h-1.00zM285.00 152.4h1.00v6.0h-1.00zM286.00 152.1h1.00v6.7h-1.00zM289.00 153.3h1.00v4.2h-1.00zM290.00 152.9h1.00v5.0h-1.00zM291.00 152.3h1.00v6.2h-1.00zM292.00 152.2h1.00v6.3h-1.00zM293.00 151.9h1.00v7.0h-1.00zM294.00 152.7h1.00v5.4h-1.00zM295.00 152.6h1.00v5.6h-1.00zM296.00 152.9h1.00v5.0h-1.00zM297.00 151.8h1.00v7.3h-1.00zM298.00 151.9h1.00v7.0h-1.00zM299.00 152.3h1.00v6.2h-1.00zM300.00 151.8h1.00v7.2h-1.00zM301.00 152.5h1.00v5.9h-1.00zM302.00 152.5h1.00v5.8h-1.00zM303.00 154.1h1.00v2.6h-1.00zM308.00 153.2h1.00v4.4h-1.00zM309.00 152.7h1.00v5.4h-1.00zM310.00 152.2h1.00v6.3h-1.00zM311.00 152.7h1.00v5.5h-1.00zM312.00 152.4h1.00v6.0h-1.00zM313.00 152.4h1.00v6.0h-1.00zM314.00 152.3h1.00v6.2h-1.00zM315.00 152.6h1.00v5.5h-1.00zM316.00 152.5h1.00v5.7h-1.00zM317.00 153.0h1.00v4.7h-1.00zM318.00 152.8h1.00v5.1h-1.00zM319.00 152.4h1.00v5.9h-1.00zM320.00 151.8h1.00v7.2h-1.00zM321.00 152.7h1.00v5.5h-1.00zM325.00 154.1h1.00v2.6h-1.00zM326.00 153.0h1.00v4.8h-1.00zM327.00 152.6h1.00v5.6h-1.00zM328.00 152.9h1.00v5.1h-1.00zM329.00 152.5h1.00v5.8h-1.00zM330.00 153.5h1.00v3.9h-1.00zM332.00 153.9h1.00v2.9h-1.00zM333.00 152.5h1.00v5.7h-1.00zM334.00 152.5h1.00v5.7h-1.00zM335.00 152.2h1.00v6.4h-1.00zM336.00 152.1h1.00v6.7h-1.00zM337.00 151.7h1.00v7.4h-1.00zM338.00 152.8h1.00v5.3h-1.00zM339.00 152.4h1.00v6.0h-1.00zM340.00 153.9h1.00v3.1h-1.00zM348.00 152.6h1.00v5.6h-1.00zM349.00 152.7h1.00v5.4h-1.00zM350.00 152.7h1.00v5.4h-1.00zM351.00 152.6h1.00v5.5h-1.00zM352.00 152.0h1.00v6.8h-1.00zM353.00 152.0h1.00v6.9h-1.00zM354.00 152.8h1.00v5.2h-1.00zM355.00 152.3h1.00v6.2h-1.00zM356.00 152.6h1.00v5.6h-1.00zM357.00 153.9h1.00v2.9h-1.00zM358.00 153.2h1.00v4.4h-1.00zM359.00 152.3h1.00v6.1h-1.00zM360.00 152.1h1.00v6.6h-1.00zM361.00 152.2h1.00v6.4h-1.00zM362.00 151.0h1.00v8.8h-1.00zM363.00 152.0h1.00v6.8h-1.00zM364.00 153.4h1.00v3.9h-1.00zM366.00 153.4h1.00v4.0h-1.00zM367.00 151.9h1.00v7.1h-1.00zM368.00 151.7h1.00v7.4h-1.00zM369.00 151.4h1.00v7.9h-1.00zM370.00 152.2h1.00v6.5h-1.00zM371.00 153.9h1.00v3.0h-1.00zM380.00 153.8h1.00v3.3h-1.00zM381.00 152.1h1.00v6.6h-1.00zM382.00 153.0h1.00v4.9h-1.00zM383.00 152.3h1.00v6.2h-1.00zM384.00 151.6h1.00v7.6h-1.00zM385.00 152.0h1.00v6.9h-1.00zM386.00 150.6h1.00v9.7h-1.00zM387.00 150.6h1.00v9.5h-1.00zM388.00 150.9h1.00v8.9h-1.00zM389.00 151.6h1.00v7.6h-1.00zM390.00 151.6h1.00v7.6h-1.00zM391.00 150.8h1.00v9.2h-1.00zM392.00 151.0h1.00v8.8h-1.00zM393.00 151.6h1.00v7.6h-1.00zM394.00 150.8h1.00v9.2h-1.00zM395.00 150.2h1.00v10.3h-1.00zM396.00 149.6h1.00v11.5h-1.00zM397.00 151.2h1.00v8.4h-1.00zM398.00 150.8h1.00v9.2h-1.00zM399.00 150.9h1.00v9.0h-1.00zM400.00 151.3h1.00v8.2h-1.00zM401.00 151.5h1.00v7.8h-1.00zM402.00 151.0h1.00v8.8h-1.00zM403.00 151.1h1.00v8.5h-1.00zM404.00 151.9h1.00v7.1h-1.00zM405.00 151.5h1.00v7.9h-1.00zM406.00 151.7h1.00v7.5h-1.00zM407.00 151.4h1.00v8.1h-1.00zM408.00 151.2h1.00v8.5h-1.00zM409.00 151.1h1.00v8.5h-1.00zM410.00 151.3h1.00v8.2h-1.00zM411.00 150.8h1.00v9.2h-1.00zM412.00 150.9h1.00v9.0h-1.00zM413.00 150.8h1.00v9.2h-1.00zM414.00 151.0h1.00v8.8h-1.00zM415.00 150.4h1.00v10.0h-1.00zM416.00 151.4h1.00v8.0h-1.00zM417.00 151.2h1.00v8.3h-1.00zM418.00 151.6h1.00v7.6h-1.00zM419.00 150.8h1.00v9.2h-1.00zM420.00 150.8h1.00v9.2h-1.00zM421.00 151.0h1.00v8.7h-1.00zM422.00 152.2h1.00v6.5h-1.00zM423.00 152.0h1.00v6.8h-1.00zM424.00 151.7h1.00v7.4h-1.00zM425.00 152.2h1.00v6.5h-1.00zM426.00 152.5h1.00v5.7h-1.00zM427.00 152.2h1.00v6.4h-1.00zM428.00 152.8h1.00v5.2h-1.00zM429.00 152.7h1.00v5.3h-1.00zM430.00 152.7h1.00v5.3h-1.00zM431.00 151.8h1.00v7.1h-1.00zM432.00 150.9h1.00v8.9h-1.00zM433.00 151.7h1.00v7.3h-1.00zM434.00 152.4h1.00v5.9h-1.00zM435.00 151.3h1.00v8.1h-1.00zM436.00 151.0h1.00v8.8h-1.00zM437.00 151.6h1.00v7.6h-1.00zM438.00 152.1h1.00v6.5h-1.00zM439.00 151.8h1.00v7.2h-1.00zM440.00 151.5h1.00v7.8h-1.00zM441.00 150.8h1.00v9.3h-1.00zM442.00 151.4h1.00v8.0h-1.00zM443.00 152.2h1.00v6.4h-1.00zM444.00 150.7h1.00v9.5h-1.00zM445.00 151.5h1.00v7.7h-1.00zM446.00 151.2h1.00v8.3h-1.00zM447.00 152.0h1.00v6.8h-1.00zM448.00 151.7h1.00v7.3h-1.00zM449.00 151.2h1.00v8.4h-1.00zM450.00 151.1h1.00v8.6h-1.00zM451.00 151.6h1.00v7.6h-1.00zM452.00 150.6h1.00v9.7h-1.00zM453.00 149.8h1.00v11.3h-1.00zM454.00 150.0h1.00v10.7h-1.00zM455.00 149.5h1.00v11.7h-1.00zM456.00 151.0h1.00v8.8h-1.00zM457.00 150.8h1.00v9.2h-1.00zM458.00 150.6h1.00v9.6h-1.00zM459.00 151.4h1.00v8.0h-1.00zM460.00 151.0h1.00v8.7h-1.00zM461.00 151.6h1.00v7.5h-1.00zM462.00 151.7h1.00v7.5h-1.00zM463.00 151.5h1.00v7.8h-1.00zM464.00 153.5h1.00v3.8h-1.00zM473.00 153.4h1.00v3.9h-1.00zM474.00 152.1h1.00v6.7h-1.00zM475.00 152.7h1.00v5.4h-1.00zM476.00 152.1h1.00v6.7h-1.00zM477.00 152.3h1.00v6.2h-1.00zM478.00 152.8h1.00v5.2h-1.00zM479.00 152.4h1.00v6.0h-1.00zM480.00 152.2h1.00v6.5h-1.00zM481.00 152.3h1.00v6.3h-1.00zM482.00 151.9h1.00v6.9h-1.00zM483.00 151.9h1.00v6.9h-1.00zM484.00 152.1h1.00v6.6h-1.00zM485.00 152.5h1.00v5.7h-1.00zM486.00 152.4h1.00v6.0h-1.00zM487.00 152.7h1.00v5.5h-1.00zM488.00 152.7h1.00v5.4h-1.00zM489.00 152.2h1.00v6.3h-1.00zM490.00 153.3h1.00v4.1h-1.00zM499.00 153.6h1.00v3.6h-1.00zM500.00 152.0h1.00v6.9h-1.00zM501.00 151.8h1.00v7.2h-1.00zM502.00 151.7h1.00v7.5h-1.00zM503.00 152.1h1.00v6.6h-1.00zM504.00 152.0h1.00v6.8h-1.00zM505.00 152.4h1.00v5.9h-1.00zM506.00 152.2h1.00v6.4h-1.00zM507.00 151.9h1.00v7.1h-1.00zM508.00 151.9h1.00v7.0h-1.00zM509.00 151.9h1.00v7.0h-1.00zM510.00 152.7h1.00v5.4h-1.00zM511.00 152.3h1.00v6.3h-1.00zM512.00 152.2h1.00v6.3h-1.00zM513.00 152.7h1.00v5.4h-1.00zM514.00 152.3h1.00v6.2h-1.00zM515.00 152.2h1.00v6.5h-1.00zM516.00 153.0h1.00v4.8h-1.00zM517.00 152.2h1.00v6.4h-1.00zM518.00 153.0h1.00v4.9h-1.00zM519.00 152.3h1.00v6.2h-1.00zM520.00 154.1h1.00v2.7h-1.00zM523.00 153.8h1.00v3.3h-1.00zM524.00 152.8h1.00v5.2h-1.00zM525.00 152.0h1.00v6.9h-1.00zM526.00 152.6h1.00v5.7h-1.00zM527.00 152.6h1.00v5.6h-1.00zM528.00 151.7h1.00v7.3h-1.00zM529.00 152.8h1.00v5.2h-1.00zM530.00 151.8h1.00v7.2h-1.00zM531.00 152.0h1.00v6.8h-1.00zM532.00 152.2h1.00v6.3h-1.00zM533.00 151.6h1.00v7.5h-1.00zM534.00 151.3h1.00v8.3h-1.00zM535.00 151.7h1.00v7.5h-1.00zM536.00 152.9h1.00v5.1h-1.00zM537.00 153.8h1.00v3.1h-1.00zM538.00 153.9h1.00v3.0h-1.00zM539.00 152.7h1.00v5.3h-1.00zM540.00 152.2h1.00v6.3h-1.00zM541.00 152.4h1.00v6.0h-1.00zM542.00 152.2h1.00v6.4h-1.00zM543.00 152.4h1.00v6.1h-1.00zM544.00 152.5h1.00v5.8h-1.00zM545.00 152.5h1.00v5.9h-1.00zM546.00 152.6h1.00v5.5h-1.00zM547.00 151.9h1.00v7.0h-1.00zM548.00 152.6h1.00v5.7h-1.00zM549.00 151.8h1.00v7.1h-1.00zM550.00 152.1h1.00v6.5h-1.00zM551.00 152.3h1.00v6.2h-1.00zM552.00 152.5h1.00v5.8h-1.00zM553.00 152.0h1.00v6.9h-1.00zM554.00 151.8h1.00v7.1h-1.00zM555.00 152.4h1.00v5.9h-1.00zM556.00 154.1h1.00v2.7h-1.00zM560.00 153.3h1.00v4.2h-1.00zM561.00 151.7h1.00v7.5h-1.00zM562.00 151.6h1.00v7.6h-1.00zM563.00 152.2h1.00v6.4h-1.00zM564.00 151.4h1.00v7.9h-1.00zM565.00 152.7h1.00v5.4h-1.00z" fill="#6565da"/>
 <path d="M89.00 242.7h1.00v27.6h-1.00zM90.00 238.7h1.00v38.2h-1.00zM91.00 233.6h1.00v40.8h-1.00zM92.00 243.2h1.00v38.0h-1.00zM93.00 233.7h1.00v44.8h-1.00zM94.00 233.0h1.00v43.7h-1.00zM95.00 236.5h1.00v40.9h-1.00zM96.00 235.7h1.00v32.1h-1.00zM97.00 238.1h1.00v39.0h-1.00zM98.00 233.7h1.00v38.7h-1.00zM99.00 238.8h1.00v42.0h-1.00zM100.00 239.1h1.00v29.4h-1.00zM101.00 238.3h1.00v31.6h-1.00zM102.00 233.4h1.00v41.9h-1.00zM103.00 233.9h1.00v46.9h-1.00zM104.00 230.9h1.00v38.4h-1.00zM105.00 233.4h1.00v35.5h-1.00zM106.00 230.6h1.00v40.5h-1.00zM107.00 231.9h1.00v44.4h-1.00zM108.00 239.8h1.00v31.2h-1.00zM109.00 241.8h1.00v27.3h-1.00zM115.00 241.4h1.00v25.5h-1.00zM116.00 240.3h1.00v30.3h-1.00zM117.00 242.1h1.00v27.9h-1.00zM118.00 239.3h1.00v32.5h-1.00zM119.00 240.7h1.00v35.8h-1.00zM120.00 240.5h1.00v27.3h-1.00zM121.00 243.7h1.00v23.4h-1.00zM122.00 236.2h1.00v36.0h-1.00zM123.00 240.0h1.00v30.9h-1.00zM124.00 239.4h1.00v31.6h-1.00zM125.00 235.1h1.00v31.0h-1.00zM126.00 235.7h1.00v36.9h-1.00zM127.00 238.3h1.00v34.4h-1.00zM128.00 234.8h1.00v32.4h-1.00zM129.00 235.4h1.00v37.9h-1.00zM130.00 239.9h1.00v29.9h-1.00zM131.00 243.0h1.00v22.4h-1.00zM134.00 241.6h1.00v25.1h-1.00zM135.00 237.6h1.00v39.6h-1.00zM136.00 231.6h1.00v38.7h-1.00zM137.00 238.9h1.00v32.9h-1.00zM138.00 241.3h1.00v31.3h-1.00zM139.00 237.5h1.00v35.8h-1.00zM140.00 238.3h1.00v31.2h-1.00zM141.00 233.8h1.00v36.4h-1.00zM142.00 230.7h1.00v45.1h-1.00zM143.00 241.5h1.00v27.7h-1.00zM144.00 240.5h1.00v32.9h-1.00zM145.00 233.7h1.00v43.3h-1.00zM146.00 232.8h1.00v36.8h-1.00zM147.00 235.2h1.00v46.1h-1.00zM148.00 236.9h1.00v38.9h-1.00zM149.00 240.3h1.00v36.5h-1.00zM150.00 231.6h1.00v41.6h-1.00zM151.00 240.0h1.00v33.7h-1.00zM152.00 238.6h1.00v42.3h-1.00zM153.00 240.5h1.00v36.4h-1.00zM154.00 238.0h1.00v38.1h-1.00zM155.00 236.4h1.00v38.0h-1.00zM156.00 234.9h1.00v37.7h-1.00zM157.00 241.6h1.00v34.4h-1.00zM158.00 241.4h1.00v28.0h-1.00zM159.00 239.5h1.00v31.9h-1.00zM160.00 240.4h1.00v37.4h-1.00zM161.00 235.1h1.00v43.0h-1.00zM162.00 235.2h1.00v40.4h-1.00zM163.00 231.1h1.00v48.8h-1.00zM164.00 231.1h1.00v45.4h-1.00zM165.00 236.7h1.00v40.0h-1.00zM166.00 239.1h1.00v36.2h-1.00zM169.00 247.9h1.00v15.1h-1.00zM170.00 239.2h1.00v29.4h-1.00zM171.00 234.3h1.00v36.4h-1.00zM172.00 238.6h1.00v32.1h-1.00zM173.00 240.7h1.00v29.3h-1.00zM174.00 241.0h1.00v29.8h-1.00zM175.00 240.0h1.00v30.7h-1.00zM176.00 241.0h1.00v28.9h-1.00zM177.00 240.8h1.00v29.3h-1.00zM178.00 239.8h1.00v30.8h-1.00zM179.00 239.7h1.00v31.4h-1.00zM180.00 240.0h1.00v30.8h-1.00zM181.00 238.1h1.00v32.6h-1.00zM182.00 241.4h1.00v38.2h-1.00zM183.00 240.4h1.00v29.6h-1.00zM184.00 237.2h1.00v34.5h-1.00zM185.00 241.4h1.00v36.2h-1.00zM186.00 240.1h1.00v30.6h-1.00zM187.00 231.6h1.00v39.8h-1.00zM188.00 240.6h1.00v30.3h-1.00zM189.00 240.8h1.00v29.1h-1.00zM190.00 241.6h1.00v27.7h-1.00zM191.00 240.3h1.00v31.3h-1.00zM192.00 241.1h1.00v34.9h-1.00zM193.00 242.2h1.00v26.5h-1.00zM194.00 242.1h1.00v31.1h-1.00zM195.00 241.0h1.00v39.0h-1.00zM196.00 240.3h1.00v31.0h-1.00zM197.00 241.5h1.00v27.7h-1.00zM198.00 241.9h1.00v27.0h-1.00zM199.00 241.3h1.00v28.3h-1.00zM200.00 238.3h1.00v32.1h-1.00zM201.00 235.9h1.00v41.4h-1.00zM202.00 241.6h1.00v27.8h-1.00zM203.00 241.1h1.00v30.8h-1.00zM204.00 240.0h1.00v29.0h-1.00zM205.00 240.7h1.00v29.3h-1.00zM206.00 242.3h1.00v26.2h-1.00zM207.00 241.0h1.00v29.3h-1.00zM208.00 236.6h1.00v34.2h-1.00zM209.00 241.4h1.00v29.7h-1.00zM210.00 236.4h1.00v32.3h-1.00zM211.00 240.7h1.00v35.4h-1.00zM212.00 241.0h1.00v37.1h-1.00zM213.00 241.1h1.00v36.3h-1.00zM214.00 241.4h1.00v27.9h-1.00zM215.00 241.4h1.00v30.4h-1.00zM216.00 241.5h1.00v27.4h-1.00zM217.00 239.4h1.00v31.4h-1.00zM218.00 241.6h1.00v37.7h-1.00zM219.00 239.8h1.00v40.3h-1.00zM220.00 234.5h1.00v36.3h-1.00zM221.00 240.7h1.00v29.4h-1.00zM222.00 240.1h1.00v30.6h-1.00zM223.00 241.5h1.00v36.2h-1.00zM224.00 229.1h1.00v41.4h-1.00zM225.00 241.6h1.00v27.7h-1.00zM226.00 239.5h1.00v31.1h-1.00zM227.00 240.7h1.00v29.4h-1.00zM228.00 237.0h1.00v39.3h-1.00zM229.00 241.1h1.00v33.3h-1.00zM230.00 241.4h1.00v27.8h-1.00zM231.00 241.9h1.00v26.9h-1.00zM232.00 240.6h1.00v29.6h-1.00zM233.00 230.7h1.00v41.4h-1.00zM234.00 242.5h1.00v29.5h-1.00zM235.00 234.2h1.00v38.8h-1.00zM236.00 241.0h1.00v27.9h-1.00zM237.00 234.0h1.00v36.6h-1.00zM238.00 241.8h1.00v28.2h-1.00zM239.00 241.5h1.00v34.4h-1.00zM240.00 232.8h1.00v41.1h-1.00zM241.00 240.8h1.00v29.2h-1.00zM242.00 239.9h1.00v35.9h-1.00zM243.00 238.9h1.00v32.1h-1.00zM244.00 241.8h1.00v27.2h-1.00zM245.00 241.5h1.00v31.2h-1.00zM246.00 238.3h1.00v32.0h-1.00zM247.00 240.4h1.00v29.9h-1.00zM248.00 234.4h1.00v40.0h-1.00zM249.00 241.1h1.00v28.6h-1.00zM250.00 236.3h1.00v35.0h-1.00zM251.00 240.5h1.00v30.1h-1.00zM252.00 237.7h1.00v40.3h-1.00zM253.00 240.6h1.00v29.1h-1.00zM254.00 239.8h1.00v31.1h-1.00zM255.00 241.2h1.00v28.4h-1.00zM256.00 233.1h1.00v39.9h-1.00zM257.00 237.0h1.00v33.2h-1.00zM258.00 241.7h1.00v27.5h-1.00zM259.00 240.5h1.00v29.7h-1.00zM260.00 240.9h1.00v30.2h-1.00zM261.00 231.1h1.00v37.8h-1.00zM262.00 242.1h1.00v26.7h-1.00zM263.00 240.1h1.00v30.6h-1.00zM264.00 240.1h1.00v27.6h-1.00zM265.00 248.2h1.00v15.0h-1.00zM267.00 249.2h1.00v12.4h-1.00zM268.00 238.2h1.00v34.5h-1.00zM269.00 238.3h1.00v34.1h-1.00zM270.00 238.8h1.00v33.2h-1.00zM271.00 237.9h1.00v32.7h-1.00zM272.00 239.4h1.00v27.3h-1.00zM273.00 238.4h1.00v37.1h-1.00zM274.00 236.2h1.00v40.4h-1.00zM275.00 238.7h1.00v33.5h-1.00zM276.00 236.3h1.00v35.3h-1.00zM277.00 235.9h1.00v35.5h-1.00zM278.00 241.7h1.00v29.6h-1.00zM279.00 249.8h1.00v11.2h-1.00zM280.00 242.8h1.00v24.0h-1.00zM281.00 235.9h1.00v43.4h-1.00zM282.00 242.7h1.00v27.2h-1.00zM283.00 231.3h1.00v44.3h-1.00zM284.00 229.7h1.00v38.5h-1.00zM285.00 235.1h1.00v38.6h-1.00zM286.00 245.5h1.00v29.7h-1.00zM289.00 243.2h1.00v21.4h-1.00zM290.00 231.2h1.00v43.0h-1.00zM291.00 236.8h1.00v42.1h-1.00zM292.00 237.9h1.00v40.7h-1.00zM293.00 231.9h1.00v44.7h-1.00zM294.00 231.5h1.00v41.3h-1.00zM295.00 233.6h1.00v37.0h-1.00zM296.00 241.3h1.00v30.8h-1.00zM297.00 236.7h1.00v37.3h-1.00zM298.00 236.1h1.00v34.9h-1.00zM299.00 239.8h1.00v31.1h-1.00zM300.00 239.0h1.00v32.9h-1.00zM301.00 235.4h1.00v44.9h-1.00zM302.00 239.9h1.00v21.5h-1.00zM303.00 246.4h1.00v19.8h-1.00zM308.00 246.0h1.00v18.8h-1.00zM309.00 233.0h1.00v40.8h-1.00zM310.00 236.2h1.00v35.7h-1.00zM311.00 236.5h1.00v41.4h-1.00zM312.00 231.5h1.00v38.8h-1.00zM313.00 240.5h1.00v34.0h-1.00zM314.00 239.5h1.00v31.9h-1.00zM315.00 238.9h1.00v39.2h-1.00zM316.00 235.6h1.00v39.8h-1.00zM317.00 232.5h1.00v39.0h-1.00zM318.00 249.2h1.00v12.3h-1.00zM319.00 236.4h1.00v33.9h-1.00zM320.00 243.2h1.00v17.1h-1.00zM321.00 244.3h1.00v24.9h-1.00zM325.00 248.1h1.00v18.0h-1.00zM326.00 243.7h1.00v23.3h-1.00zM327.00 246.0h1.00v18.8h-1.00zM328.00 239.4h1.00v29.5h-1.00zM329.00 243.9h1.00v32.9h-1.00zM330.00 243.5h1.00v24.1h-1.00zM332.00 245.4h1.00v22.9h-1.00zM333.00 245.0h1.00v20.8h-1.00zM334.00 236.3h1.00v31.1h-1.00zM335.00 242.3h1.00v26.3h-1.00zM336.00 240.3h1.00v37.4h-1.00zM337.00 237.5h1.00v36.2h-1.00zM338.00 239.0h1.00v36.3h-1.00zM339.00 240.8h1.00v33.5h-1.00zM340.00 246.0h1.00v20.1h-1.00zM348.00 242.9h1.00v30.3h-1.00zM349.00 238.9h1.00v27.8h-1.00zM350.00 244.3h1.00v22.2h-1.00zM351.00 242.8h1.00v25.3h-1.00zM352.00 243.7h1.00v23.3h-1.00zM353.00 242.8h1.00v31.4h-1.00zM354.00 240.8h1.00v26.7h-1.00zM355.00 237.2h1.00v34.5h-1.00zM356.00 239.3h1.00v26.9h-1.00zM357.00 247.1h1.00v15.2h-1.00zM358.00 243.4h1.00v27.2h-1.00zM359.00 237.7h1.00v35.0h-1.00zM360.00 243.8h1.00v35.4h-1.00zM361.00 235.9h1.00v34.4h-1.00zM362.00 242.5h1.00v28.2h-1.00zM363.00 234.7h1.00v34.8h-1.00zM364.00 248.2h1.00v15.2h-1.00zM366.00 249.6h1.00v15.3h-1.00zM367.00 244.2h1.00v31.1h-1.00zM368.00 243.9h1.00v24.4h-1.00zM369.00 239.8h1.00v37.3h-1.00zM370.00 235.4h1.00v35.5h-1.00zM371.00 244.1h1.00v21.0h-1.00zM380.00 248.2h1.00v14.3h-1.00zM381.00 243.5h1.00v26.2h-1.00zM382.00 238.9h1.00v33.0h-1.00zM383.00 238.4h1.00v36.2h-1.00zM384.00 242.0h1.00v26.9h-1.00zM385.00 232.4h1.00v39.2h-1.00zM386.00 238.7h1.00v33.3h-1.00zM387.00 238.0h1.00v31.0h-1.00zM388.00 237.9h1.00v37.3h-1.00zM389.00 241.6h1.00v27.5h-1.00zM390.00 240.7h1.00v29.5h-1.00zM391.00 234.4h1.00v37.2h-1.00zM392.00 237.4h1.00v39.9h-1.00zM393.00 239.8h1.00v37.9h-1.00zM394.00 238.7h1.00v31.7h-1.00zM395.00 239.4h1.00v30.9h-1.00zM396.00 241.2h1.00v28.3h-1.00zM397.00 240.0h1.00v29.7h-1.00zM398.00 239.9h1.00v31.3h-1.00zM399.00 242.4h1.00v26.2h-1.00zM400.00 240.1h1.00v30.5h-1.00zM401.00 242.3h1.00v29.7h-1.00zM402.00 242.5h1.00v25.9h-1.00zM403.00 239.1h1.00v32.4h-1.00zM404.00 242.2h1.00v26.0h-1.00zM405.00 239.2h1.00v32.4h-1.00zM406.00 234.9h1.00v34.0h-1.00zM407.00 231.2h1.00v38.4h-1.00zM408.00 247.9h1.00v15.0h-1.00zM409.00 232.5h1.00v38.9h-1.00zM410.00 238.3h1.00v32.4h-1.00zM411.00 239.9h1.00v29.0h-1.00zM412.00 233.6h1.00v37.9h-1.00zM413.00 240.4h1.00v31.1h-1.00zM414.00 234.5h1.00v40.8h-1.00zM415.00 242.4h1.00v28.0h-1.00zM416.00 238.9h1.00v33.1h-1.00zM417.00 239.2h1.00v29.1h-1.00zM418.00 241.7h1.00v27.4h-1.00zM419.00 241.8h1.00v34.7h-1.00zM420.00 232.5h1.00v36.9h-1.00zM421.00 239.6h1.00v29.3h-1.00zM422.00 235.2h1.00v34.3h-1.00zM423.00 231.9h1.00v37.6h-1.00zM424.00 242.6h1.00v31.8h-1.00zM425.00 230.5h1.00v39.9h-1.00zM426.00 241.4h1.00v30.3h-1.00zM427.00 241.5h1.00v27.2h-1.00zM428.00 240.0h1.00v30.7h-1.00zM429.00 240.5h1.00v29.6h-1.00zM430.00 242.5h1.00v28.1h-1.00zM431.00 238.6h1.00v41.8h-1.00zM432.00 242.9h1.00v25.1h-1.00zM433.00 239.8h1.00v32.7h-1.00zM434.00 244.8h1.00v16.7h-1.00zM435.00 240.6h1.00v29.6h-1.00zM436.00 240.3h1.00v29.4h-1.00zM437.00 239.3h1.00v30.9h-1.00zM438.00 243.7h1.00v29.2h-1.00zM439.00 231.7h1.00v40.3h-1.00zM440.00 243.2h1.00v32.1h-1.00zM441.00 240.7h1.00v29.4h-1.00zM442.00 240.7h1.00v34.8h-1.00zM443.00 242.2h1.00v26.5h-1.00zM444.00 242.2h1.00v26.1h-1.00zM445.00 239.9h1.00v36.7h-1.00zM446.00 237.4h1.00v33.4h-1.00zM447.00 235.3h1.00v42.7h-1.00zM448.00 240.4h1.00v32.7h-1.00zM449.00 234.9h1.00v37.3h-1.00zM450.00 239.1h1.00v32.7h-1.00zM451.00 237.9h1.00v32.5h-1.00zM452.00 238.8h1.00v33.2h-1.00zM453.00 239.2h1.00v36.9h-1.00zM454.00 240.7h1.00v36.7h-1.00zM455.00 249.6h1.00v15.9h-1.00zM456.00 240.7h1.00v29.5h-1.00zM457.00 238.7h1.00v33.5h-1.00zM458.00 241.9h1.00v26.9h-1.00zM459.00 237.2h1.00v34.8h-1.00zM460.00 239.5h1.00v31.9h-1.00zM461.00 240.1h1.00v37.4h-1.00zM462.00 239.4h1.00v36.6h-1.00zM463.00 243.9h1.00v22.9h-1.00zM464.00 248.0h1.00v14.7h-1.00zM473.00 238.1h1.00v29.5h-1.00zM474.00 236.0h1.00v39.0h-1.00zM475.00 238.5h1.00v33.9h-1.00zM476.00 248.8h1.00v30.8h-1.00zM477.00 230.5h1.00v41.1h-1.00zM478.00 233.4h1.00v43.6h-1.00zM479.00 239.9h1.00v31.0h-1.00zM480.00 242.1h1.00v26.7h-1.00zM481.00 237.3h1.00v44.0h-1.00zM482.00 242.9h1.00v24.9h-1.00zM483.00 241.3h1.00v28.1h-1.00zM484.00 240.2h1.00v30.5h-1.00zM485.00 241.5h1.00v27.7h-1.00zM486.00 237.3h1.00v40.0h-1.00zM487.00 232.3h1.00v47.6h-1.00zM488.00 236.2h1.00v38.4h-1.00zM489.00 238.1h1.00v36.1h-1.00zM490.00 242.8h1.00v28.5h-1.00zM499.00 243.7h1.00v23.3h-1.00zM500.00 236.2h1.00v36.5h-1.00zM501.00 243.0h1.00v24.9h-1.00zM502.00 242.1h1.00v34.4h-1.00zM503.00 235.0h1.00v36.1h-1.00zM504.00 240.9h1.00v36.1h-1.00zM505.00 239.6h1.00v31.7h-1.00zM506.00 236.1h1.00v37.9h-1.00zM507.00 233.9h1.00v33.6h-1.00zM508.00 231.7h1.00v37.7h-1.00zM509.00 237.0h1.00v36.8h-1.00zM510.00 240.4h1.00v38.7h-1.00zM511.00 240.4h1.00v31.1h-1.00zM512.00 237.8h1.00v38.7h-1.00zM513.00 241.1h1.00v30.2h-1.00zM514.00 236.0h1.00v33.6h-1.00zM515.00 234.1h1.00v34.8h-1.00zM516.00 233.4h1.00v38.6h-1.00zM517.00 232.2h1.00v35.1h-1.00zM518.00 243.9h1.00v22.9h-1.00zM519.00 240.0h1.00v30.7h-1.00zM520.00 247.3h1.00v18.8h-1.00zM523.00 244.2h1.00v22.5h-1.00zM524.00 241.7h1.00v29.1h-1.00zM525.00 237.1h1.00v36.5h-1.00zM526.00 237.4h1.00v36.0h-1.00zM527.00 243.3h1.00v25.3h-1.00zM528.00 234.5h1.00v38.6h-1.00zM529.00 234.2h1.00v35.2h-1.00zM530.00 237.5h1.00v33.4h-1.00zM531.00 238.7h1.00v33.5h-1.00zM532.00 243.0h1.00v24.7h-1.00zM533.00 235.7h1.00v36.0h-1.00zM534.00 237.8h1.00v31.9h-1.00zM535.00 233.2h1.00v45.2h-1.00zM536.00 239.5h1.00v30.9h-1.00zM537.00 244.9h1.00v19.3h-1.00zM538.00 245.3h1.00v18.7h-1.00zM539.00 236.3h1.00v31.8h-1.00zM540.00 241.3h1.00v22.2h-1.00zM541.00 244.1h1.00v23.8h-1.00zM542.00 242.5h1.00v30.3h-1.00zM543.00 235.1h1.00v39.8h-1.00zM544.00 233.1h1.00v40.0h-1.00zM545.00 240.6h1.00v29.6h-1.00zM546.00 232.8h1.00v38.7h-1.00zM547.00 233.4h1.00v36.4h-1.00zM548.00 239.5h1.00v29.7h-1.00zM549.00 235.0h1.00v33.4h-1.00zM550.00 240.7h1.00v38.1h-1.00zM551.00 236.3h1.00v41.0h-1.00zM552.00 233.2h1.00v43.0h-1.00zM553.00 237.6h1.00v35.1h-1.00zM554.00 239.4h1.00v39.2h-1.00zM555.00 241.3h1.00v35.1h-1.00zM556.00 249.2h1.00v13.8h-1.00zM560.00 248.7h1.00v13.4h-1.00zM561.00 238.3h1.00v37.7h-1.00zM562.00 242.1h1.00v33.2h-1.00zM563.00 239.5h1.00v31.7h-1.00zM564.00 237.7h1.00v38.6h-1.00zM565.00 234.2h1.00v42.5h-1.00z" fill="#3b3bc8"/>
 <path d="M89.00 252.6h1.00v5.7h-1.00zM90.00 252.4h1.00v6.0h-1.00zM91.00 251.2h1.00v8.3h-1.00zM92.00 251.3h1.00v8.2h-1.00zM93.00 252.7h1.00v5.3h-1.00zM94.00 252.9h1.00v5.1h-1.00zM95.00 251.9h1.00v7.0h-1.00zM96.00 252.1h1.00v6.6h-1.00zM97.00 252.4h1.00v6.0h-1.00zM98.00 252.4h1.00v6.1h-1.00zM99.00 252.1h1.00v6.5h-1.00zM100.00 251.3h1.00v8.2h-1.00zM101.00 252.0h1.00v6.9h-1.00zM102.00 251.4h1.00v7.9h-1.00zM103.00 251.3h1.00v8.2h-1.00zM104.00 251.7h1.00v7.3h-1.00zM105.00 252.5h1.00v5.9h-1.00zM106.00 251.6h1.00v7.6h-1.00zM107.00 251.2h1.00v8.5h-1.00zM108.00 252.4h1.00v6.1h-1.00zM109.00 252.8h1.00v5.2h-1.00zM115.00 252.4h1.00v6.0h-1.00zM116.00 252.3h1.00v6.2h-1.00zM117.00 252.5h1.00v5.8h-1.00zM118.00 252.2h1.00v6.4h-1.00zM119.00 252.9h1.00v5.1h-1.00zM120.00 252.3h1.00v6.3h-1.00zM121.00 252.5h1.00v5.7h-1.00zM122.00 252.3h1.00v6.1h-1.00zM123.00 252.4h1.00v6.1h-1.00zM124.00 252.1h1.00v6.6h-1.00zM125.00 252.4h1.00v6.0h-1.00zM126.00 252.0h1.00v6.8h-1.00zM127.00 252.3h1.00v6.2h-1.00zM128.00 252.8h1.00v5.2h-1.00zM129.00 251.7h1.00v7.5h-1.00zM130.00 252.6h1.00v5.5h-1.00zM131.00 252.8h1.00v5.3h-1.00zM134.00 252.8h1.00v5.2h-1.00zM135.00 251.6h1.00v7.5h-1.00zM136.00 250.9h1.00v9.1h-1.00zM137.00 251.0h1.00v8.9h-1.00zM138.00 252.3h1.00v6.2h-1.00zM139.00 250.9h1.00v9.0h-1.00zM140.00 251.9h1.00v7.0h-1.00zM141.00 251.0h1.00v8.8h-1.00zM142.00 251.4h1.00v8.0h-1.00zM143.00 251.5h1.00v7.9h-1.00zM144.00 251.7h1.00v7.3h-1.00zM145.00 251.2h1.00v8.3h-1.00zM146.00 252.3h1.00v6.2h-1.00zM147.00 252.0h1.00v6.7h-1.00zM148.00 252.0h1.00v6.8h-1.00zM149.00 251.4h1.00v8.0h-1.00zM150.00 251.5h1.00v7.8h-1.00zM151.00 251.7h1.00v7.4h-1.00zM152.00 252.0h1.00v6.8h-1.00zM153.00 251.5h1.00v7.7h-1.00zM154.00 252.6h1.00v5.7h-1.00zM155.00 252.3h1.00v6.3h-1.00zM156.00 252.2h1.00v6.4h-1.00zM157.00 251.5h1.00v7.8h-1.00zM158.00 250.8h1.00v9.2h-1.00zM159.00 251.4h1.00v7.9h-1.00zM160.00 252.0h1.00v6.7h-1.00zM161.00 251.7h1.00v7.4h-1.00zM162.00 251.1h1.00v8.7h-1.00zM163.00 251.6h1.00v7.6h-1.00zM164.00 251.6h1.00v7.6h-1.00zM165.00 252.2h1.00v6.4h-1.00zM166.00 252.5h1.00v5.9h-1.00zM169.00 252.8h1.00v5.2h-1.00zM170.00 250.5h1.00v9.8h-1.00zM171.00 250.4h1.00v10.1h-1.00zM172.00 250.1h1.00v10.7h-1.00zM173.00 250.2h1.00v10.4h-1.00zM174.00 249.9h1.00v11.1h-1.00zM175.00 250.3h1.00v10.1h-1.00zM176.00 249.8h1.00v11.1h-1.00zM177.00 249.9h1.00v11.1h-1.00zM178.00 250.3h1.00v10.2h-1.00zM179.00 250.0h1.00v10.8h-1.00zM180.00 249.9h1.00v11.0h-1.00zM181.00 250.3h1.00v10.3h-1.00zM182.00 250.0h1.00v10.8h-1.00zM183.00 249.9h1.00v11.0h-1.00zM184.00 250.1h1.00v10.7h-1.00zM185.00 250.3h1.00v10.2h-1.00zM186.00 250.1h1.00v10.7h-1.00zM187.00 250.1h1.00v10.7h-1.00zM188.00 249.9h1.00v11.1h-1.00zM189.00 250.3h1.00v10.2h-1.00zM190.00 249.9h1.00v11.0h-1.00zM191.00 249.9h1.00v11.0h-1.00zM192.00 249.9h1.00v11.0h-1.00zM193.00 250.2h1.00v10.4h-1.00zM194.00 250.3h1.00v10.2h-1.00zM195.00 250.1h1.00v10.5h-1.00zM196.00 250.0h1.00v10.8h-1.00zM197.00 250.3h1.00v10.2h-1.00zM198.00 249.9h1.00v11.0h-1.00zM199.00 250.0h1.00v10.8h-1.00zM200.00 250.0h1.00v10.9h-1.00zM201.00 250.2h1.00v10.4h-1.00zM202.00 250.3h1.00v10.1h-1.00zM203.00 250.2h1.00v10.4h-1.00zM204.00 250.3h1.00v10.2h-1.00zM205.00 250.0h1.00v10.9h-1.00zM206.00 250.0h1.00v10.8h-1.00zM207.00 249.9h1.00v11.1h-1.00zM208.00 250.3h1.00v10.2h-1.00zM209.00 250.3h1.00v10.2h-1.00zM210.00 250.0h1.00v10.8h-1.00zM211.00 250.3h1.00v10.1h-1.00zM212.00 249.9h1.00v11.1h-1.00zM213.00 250.1h1.00v10.7h-1.00zM214.00 249.9h1.00v11.1h-1.00zM215.00 250.1h1.00v10.6h-1.00zM216.00 250.3h1.00v10.3h-1.00zM217.00 250.1h1.00v10.5h-1.00zM218.00 250.1h1.00v10.6h-1.00zM219.00 250.3h1.00v10.2h-1.00zM220.00 250.1h1.00v10.5h-1.00zM221.00 250.4h1.00v10.1h-1.00zM222.00 250.1h1.00v10.6h-1.00zM223.00 250.3h1.00v10.2h-1.00zM224.00 250.3h1.00v10.1h-1.00zM225.00 250.2h1.00v10.4h-1.00zM226.00 250.3h1.00v10.3h-1.00zM227.00 250.0h1.00v10.9h-1.00zM228.00 250.2h1.00v10.5h-1.00zM229.00 250.3h1.00v10.1h-1.00zM230.00 250.2h1.00v10.4h-1.00zM231.00 249.9h1.00v10.9h-1.00zM232.00 250.0h1.00v10.8h-1.00zM233.00 250.1h1.00v10.6h-1.00zM234.00 250.0h1.00v10.7h-1.00zM235.00 249.9h1.00v10.9h-1.00zM236.00 250.2h1.00v10.5h-1.00zM237.00 250.3h1.00v10.2h-1.00zM238.00 250.0h1.00v10.8h-1.00zM239.00 250.0h1.00v10.9h-1.00zM240.00 249.9h1.00v11.1h-1.00zM241.00 250.2h1.00v10.4h-1.00zM242.00 249.9h1.00v11.0h-1.00zM243.00 250.2h1.00v10.3h-1.00zM244.00 250.3h1.00v10.3h-1.00zM245.00 250.0h1.00v10.9h-1.00zM246.00 250.2h1.00v10.5h-1.00zM247.00 250.2h1.00v10.4h-1.00zM248.00 250.2h1.00v10.4h-1.00zM249.00 250.0h1.00v10.7h-1.00zM250.00 250.1h1.00v10.6h-1.00zM251.00 249.9h1.00v11.1h-1.00zM252.00 250.0h1.00v10.8h-1.00zM253.00 249.9h1.00v11.0h-1.00zM254.00 250.2h1.00v10.5h-1.00zM255.00 250.0h1.00v10.7h-1.00zM256.00 249.9h1.00v11.0h-1.00zM257.00 250.2h1.00v10.3h-1.00zM258.00 250.0h1.00v10.8h-1.00zM259.00 249.9h1.00v11.1h-1.00zM260.00 250.3h1.00v10.1h-1.00zM261.00 249.9h1.00v11.0h-1.00zM262.00 249.9h1.00v10.9h-1.00zM263.00 250.4h1.00v10.1h-1.00zM264.00 250.7h1.00v9.4h-1.00zM265.00 252.7h1.00v5.4h-1.00zM267.00 253.4h1.00v4.1h-1.00zM268.00 251.9h1.00v7.1h-1.00zM269.00 252.4h1.00v5.9h-1.00zM270.00 252.9h1.00v4.9h-1.00zM271.00 251.9h1.00v6.9h-1.00zM272.00 252.2h1.00v6.5h-1.00zM273.00 252.3h1.00v6.3h-1.00zM274.00 252.3h1.00v6.2h-1.00zM275.00 252.1h1.00v6.5h-1.00zM276.00 252.4h1.00v6.0h-1.00zM277.00 252.4h1.00v6.0h-1.00zM278.00 252.6h1.00v5.7h-1.00zM279.00 254.1h1.00v2.6h-1.00zM280.00 253.1h1.00v4.7h-1.00zM281.00 251.6h1.00v7.7h-1.00zM282.00 251.9h1.00v7.1h-1.00zM283.00 252.0h1.00v6.8h-1.00zM284.00 251.3h1.00v8.2h-1.00zM285.00 252.1h1.00v6.5h-1.00zM286.00 253.1h1.00v4.7h-1.00zM289.00 253.6h1.00v3.6h-1.00zM290.00 252.5h1.00v5.8h-1.00zM291.00 252.0h1.00v6.7h-1.00zM292.00 252.4h1.00v6.1h-1.00zM293.00 251.4h1.00v8.0h-1.00zM294.00 251.3h1.00v8.2h-1.00zM295.00 251.0h1.00v8.8h-1.00zM296.00 251.5h1.00v7.7h-1.00zM297.00 252.2h1.00v6.4h-1.00zM298.00 252.3h1.00v6.2h-1.00zM299.00 251.8h1.00v7.3h-1.00zM300.00 252.5h1.00v5.7h-1.00zM301.00 251.4h1.00v8.0h-1.00zM302.00 252.8h1.00v5.1h-1.00zM303.00 253.5h1.00v3.9h-1.00zM308.00 253.7h1.00v3.4h-1.00zM309.00 252.7h1.00v5.4h-1.00zM310.00 251.6h1.00v7.6h-1.00zM311.00 252.2h1.00v6.3h-1.00zM312.00 251.7h1.00v7.5h-1.00zM313.00 251.6h1.00v7.6h-1.00zM314.00 251.6h1.00v7.5h-1.00zM315.00 252.4h1.00v5.9h-1.00zM316.00 252.3h1.00v6.3h-1.00zM317.00 252.0h1.00v6.7h-1.00zM318.00 252.1h1.00v6.6h-1.00zM319.00 252.8h1.00v5.3h-1.00zM320.00 252.3h1.00v6.1h-1.00zM321.00 252.5h1.00v5.7h-1.00zM325.00 254.0h1.00v2.8h-1.00zM326.00 253.4h1.00v3.9h-1.00zM327.00 252.6h1.00v5.5h-1.00zM328.00 253.0h1.00v4.7h-1.00zM329.00 252.3h1.00v6.2h-1.00zM330.00 253.9h1.00v3.0h-1.00zM332.00 253.9h1.00v3.0h-1.00zM333.00 252.1h1.00v6.5h-1.00zM334.00 252.7h1.00v5.4h-1.00zM335.00 252.3h1.00v6.3h-1.00zM336.00 252.7h1.00v5.3h-1.00zM337.00 252.7h1.00v5.4h-1.00zM338.00 253.2h1.00v4.4h-1.00zM339.00 253.1h1.00v4.6h-1.00zM340.00 253.7h1.00v3.4h-1.00zM348.00 252.7h1.00v5.5h-1.00zM349.00 253.1h1.00v4.6h-1.00zM350.00 252.3h1.00v6.2h-1.00zM351.00 252.6h1.00v5.5h-1.00zM352.00 252.0h1.00v6.7h-1.00zM353.00 252.2h1.00v6.5h-1.00zM354.00 252.4h1.00v6.0h-1.00zM355.00 253.1h1.00v4.6h-1.00zM356.00 252.8h1.00v5.2h-1.00zM357.00 253.9h1.00v3.0h-1.00zM358.00 253.5h1.00v3.8h-1.00zM359.00 252.7h1.00v5.4h-1.00zM360.00 252.9h1.00v5.1h-1.00zM361.00 252.0h1.00v6.7h-1.00zM362.00 252.2h1.00v6.4h-1.00zM363.00 253.0h1.00v4.7h-1.00zM364.00 254.1h1.00v2.6h-1.00zM366.00 253.7h1.00v3.3h-1.00zM367.00 253.2h1.00v4.5h-1.00zM368.00 253.1h1.00v4.6h-1.00zM369.00 252.5h1.00v5.8h-1.00zM370.00 252.6h1.00v5.6h-1.00zM371.00 253.7h1.00v3.5h-1.00zM380.00 253.5h1.00v3.8h-1.00zM381.00 252.0h1.00v6.8h-1.00zM382.00 250.7h1.00v9.5h-1.00zM383.00 251.3h1.00v8.2h-1.00zM384.00 251.3h1.00v8.3h-1.00zM385.00 250.8h1.00v9.1h-1.00zM386.00 250.5h1.00v9.9h-1.00zM387.00 250.1h1.00v10.7h-1.00zM388.00 251.1h1.00v8.6h-1.00zM389.00 249.9h1.00v10.9h-1.00zM390.00 250.3h1.00v10.2h-1.00zM391.00 249.8h1.00v11.3h-1.00zM392.00 250.0h1.00v10.7h-1.00zM393.00 249.6h1.00v11.6h-1.00zM394.00 250.8h1.00v9.3h-1.00zM395.00 251.2h1.00v8.3h-1.00zM396.00 249.7h1.00v11.5h-1.00zM397.00 250.4h1.00v10.1h-1.00zM398.00 250.5h1.00v9.7h-1.00zM399.00 251.7h1.00v7.4h-1.00zM400.00 251.2h1.00v8.4h-1.00zM401.00 251.9h1.00v7.1h-1.00zM402.00 251.6h1.00v7.7h-1.00zM403.00 252.1h1.00v6.7h-1.00zM404.00 251.1h1.00v8.7h-1.00zM405.00 251.6h1.00v7.6h-1.00zM406.00 251.7h1.00v7.3h-1.00zM407.00 251.4h1.00v8.0h-1.00zM408.00 251.5h1.00v7.9h-1.00zM409.00 251.6h1.00v7.6h-1.00zM410.00 251.4h1.00v7.9h-1.00zM411.00 252.2h1.00v6.4h-1.00zM412.00 251.2h1.00v8.5h-1.00zM413.00 252.1h1.00v6.6h-1.00zM414.00 251.8h1.00v7.3h-1.00zM415.00 251.6h1.00v7.7h-1.00zM416.00 251.0h1.00v8.7h-1.00zM417.00 252.2h1.00v6.5h-1.00zM418.00 251.6h1.00v7.5h-1.00zM419.00 252.2h1.00v6.4h-1.00zM420.00 251.0h1.00v8.7h-1.00zM421.00 251.8h1.00v7.2h-1.00zM422.00 252.5h1.00v5.7h-1.00zM423.00 252.6h1.00v5.5h-1.00zM424.00 252.1h1.00v6.6h-1.00zM425.00 252.2h1.00v6.4h-1.00zM426.00 252.4h1.00v6.0h-1.00zM427.00 252.0h1.00v6.9h-1.00zM428.00 251.6h1.00v7.6h-1.00zM429.00 251.4h1.00v7.9h-1.00zM430.00 251.8h1.00v7.1h-1.00zM431.00 252.1h1.00v6.6h-1.00zM432.00 251.9h1.00v7.0h-1.00zM433.00 252.1h1.00v6.7h-1.00zM434.00 252.3h1.00v6.2h-1.00zM435.00 252.8h1.00v5.2h-1.00zM436.00 253.0h1.00v4.9h-1.00zM437.00 253.1h1.00v4.6h-1.00zM438.00 253.1h1.00v4.5h-1.00zM439.00 252.8h1.00v5.3h-1.00zM440.00 252.6h1.00v5.6h-1.00zM441.00 252.5h1.00v5.7h-1.00zM442.00 252.2h1.00v6.3h-1.00zM443.00 252.3h1.00v6.3h-1.00zM444.00 251.8h1.00v7.3h-1.00zM445.00 250.9h1.00v9.0h-1.00zM446.00 250.8h1.00v9.3h-1.00zM447.00 250.8h1.00v9.2h-1.00zM448.00 250.1h1.00v10.6h-1.00zM449.00 250.7h1.00v9.4h-1.00zM450.00 250.9h1.00v8.9h-1.00zM451.00 249.7h1.00v11.5h-1.00zM452.00 250.0h1.00v10.8h-1.00zM453.00 251.0h1.00v8.9h-1.00zM454.00 251.1h1.00v8.6h-1.00zM455.00 250.6h1.00v9.7h-1.00zM456.00 250.3h1.00v10.1h-1.00zM457.00 251.0h1.00v8.9h-1.00zM458.00 251.4h1.00v8.1h-1.00zM459.00 251.1h1.00v8.5h-1.00zM460.00 250.9h1.00v9.0h-1.00zM461.00 251.5h1.00v7.8h-1.00zM462.00 252.5h1.00v5.9h-1.00zM463.00 252.2h1.00v6.4h-1.00zM464.00 254.0h1.00v2.8h-1.00zM473.00 252.8h1.00v5.1h-1.00zM474.00 252.4h1.00v6.1h-1.00zM475.00 252.0h1.00v6.9h-1.00zM476.00 252.5h1.00v5.9h-1.00zM477.00 252.6h1.00v5.6h-1.00zM478.00 251.9h1.00v7.0h-1.00zM479.00 252.7h1.00v5.4h-1.00zM480.00 252.7h1.00v5.4h-1.00zM481.00 252.0h1.00v6.8h-1.00zM482.00 251.9h1.00v7.0h-1.00zM483.00 252.0h1.00v6.8h-1.00zM484.00 252.1h1.00v6.6h-1.00zM485.00 251.6h1.00v7.7h-1.00zM486.00 251.6h1.00v7.6h-1.00zM487.00 251.7h1.00v7.4h-1.00zM488.00 252.5h1.00v5.8h-1.00zM489.00 251.9h1.00v7.0h-1.00zM490.00 253.4h1.00v4.0h-1.00zM499.00 254.1h1.00v2.6h-1.00zM500.00 252.8h1.00v5.2h-1.00zM501.00 251.9h1.00v7.0h-1.00zM502.00 251.8h1.00v7.2h-1.00zM503.00 251.9h1.00v6.9h-1.00zM504.00 252.1h1.00v6.6h-1.00zM505.00 252.4h1.00v6.1h-1.00zM506.00 251.5h1.00v7.8h-1.00zM507.00 251.7h1.00v7.4h-1.00zM508.00 252.2h1.00v6.5h-1.00zM509.00 251.7h1.00v7.3h-1.00zM510.00 252.1h1.00v6.6h-1.00zM511.00 252.7h1.00v5.4h-1.00zM512.00 252.5h1.00v5.7h-1.00zM513.00 251.9h1.00v7.1h-1.00zM514.00 252.0h1.00v6.7h-1.00zM515.00 252.2h1.00v6.3h-1.00zM516.00 252.4h1.00v6.1h-1.00zM517.00 251.9h1.00v7.0h-1.00zM518.00 252.0h1.00v6.9h-1.00zM519.00 252.0h1.00v6.9h-1.00zM520.00 254.1h1.00v2.6h-1.00zM523.00 253.7h1.00v3.5h-1.00zM524.00 252.1h1.00v6.7h-1.00zM525.00 252.7h1.00v5.5h-1.00zM526.00 251.7h1.00v7.5h-1.00zM527.00 252.0h1.00v6.9h-1.00zM528.00 253.0h1.00v4.9h-1.00zM529.00 252.6h1.00v5.6h-1.00zM530.00 251.6h1.00v7.6h-1.00zM531.00 251.5h1.00v7.8h-1.00zM532.00 251.8h1.00v7.3h-1.00zM533.00 252.2h1.00v6.3h-1.00zM534.00 252.3h1.00v6.3h-1.00zM535.00 252.6h1.00v5.7h-1.00zM536.00 251.8h1.00v7.2h-1.00zM537.00 253.3h1.00v4.1h-1.00zM538.00 253.8h1.00v3.3h-1.00zM539.00 252.1h1.00v6.6h-1.00zM540.00 252.1h1.00v6.5h-1.00zM541.00 251.8h1.00v7.1h-1.00zM542.00 252.4h1.00v6.0h-1.00zM543.00 251.2h1.00v8.4h-1.00zM544.00 252.4h1.00v6.0h-1.00zM545.00 252.2h1.00v6.5h-1.00zM546.00 252.7h1.00v5.5h-1.00zM547.00 252.4h1.00v6.0h-1.00zM548.00 252.2h1.00v6.4h-1.00zM549.00 252.3h1.00v6.1h-1.00zM550.00 252.0h1.00v6.7h-1.00zM551.00 251.2h1.00v8.4h-1.00zM552.00 251.5h1.00v7.7h-1.00zM553.00 252.0h1.00v6.9h-1.00zM554.00 252.2h1.00v6.4h-1.00zM555.00 251.7h1.00v7.5h-1.00zM556.00 254.0h1.00v2.8h-1.00zM560.00 253.7h1.00v3.3h-1.00zM561.00 252.2h1.00v6.4h-1.00zM562.00 251.6h1.00v7.6h-1.00zM563.00 251.0h1.00v8.8h-1.00zM564.00 252.2h1.00v6.4h-1.00zM565.00 251.7h1.00v7.5h-1.00z" fill="#6565da"/>
 <rect x="102" y="108" width="0.9" height="195" fill="#585858"/>
</svg>

<!-- vruler labels -->
<svg width="90" height="310" viewBox="0 0 90 310" font-size="8" font-weight="bold" fill="#222">
 <text x="72.6" y="115.8">1.0</text>
 <text x="72.8" y="135.1" font-weight="normal">0.5</text>
 <text x="72.6" y="158.3">0.0</text>
 <text x="70.2" y="182.2" font-weight="normal">-0.5</text>
 <text x="69.9" y="200.2">-1.0</text>
 <text x="72.6" y="215.8">1.0</text>
 <text x="72.8" y="235.1" font-weight="normal">0.5</text>
 <text x="72.6" y="258.3">0.0</text>
 <text x="70.2" y="282.2" font-weight="normal">-0.5</text>
 <text x="69.9" y="300.2">-1.0</text>
 <g fill="#333">
 <rect x="84" y="131.9" width="3.3" height="0.9"/><rect x="84" y="155" width="3.3" height="0.9"/><rect x="84" y="178.9" width="3.3" height="0.9"/>
 <rect x="84" y="231.9" width="3.3" height="0.9"/><rect x="84" y="255" width="3.3" height="0.9"/><rect x="84" y="278.9" width="3.3" height="0.9"/>
 </g>
</svg>

<!-- track panel -->
<div class="a" style="left:4px;top:107.5px;width:62.3px;height:11.7px;background:#d3dbf2;border-bottom:0.8px solid #8e92a6;box-sizing:border-box"></div>
<div class="a" style="left:15px;top:107.5px;width:0.8px;height:11px;background:#eef1fb"></div>
<div class="a" style="left:4px;top:119.2px;width:62.3px;height:12.2px;background:#d3dbf2;border-top:0.7px solid #eef1fb;border-bottom:0.8px solid #8e92a6;box-sizing:border-box"></div>
<div class="a" style="left:34.2px;top:119.6px;width:0.7px;height:11.2px;background:#9a9eb4"></div>
<div class="a" style="left:34.9px;top:119.6px;width:0.7px;height:11.2px;background:#eef1fb"></div>
<div class="t" style="left:17.6px;top:110.3px;font-size:7.4px;color:#1c1c1c">rush-nov-20</div>
<div class="t" style="left:11.6px;top:122.3px;font-size:7.3px;color:#1c1c1c">Mute</div>
<div class="t" style="left:43.6px;top:122.3px;font-size:7.3px;color:#1c1c1c">Solo</div>
<div class="a" style="left:4px;top:291.5px;width:50.5px;height:11.6px;background:#d3dbf2;border-top:0.8px solid #f2f4fc;border-right:0.8px solid #8e92a6;box-sizing:border-box"></div>
<div class="a" style="left:14.3px;top:292.3px;width:0.7px;height:10.6px;background:#f2f4fc"></div>
<div class="t" style="left:26.3px;top:293.7px;font-size:7.3px;color:#1c1c1c">Select</div>
<svg width="70" height="310" viewBox="0 0 70 310">
 <path d="M7.8 112.1 L12.4 116.7 M12.4 112.1 L7.8 116.7" stroke="#111" stroke-width="1.3"/>
 <path d="M58 112.4 H65 L61.5 116 Z" fill="#111"/>
 <rect x="10.9" y="137.9" width="2.8" height="0.8" fill="#222"/>
 <rect x="56" y="138.3" width="3" height="0.8" fill="#222"/><rect x="57.1" y="137.2" width="0.8" height="3" fill="#222"/>
 <rect x="11" y="144.7" width="49.5" height="0.8" fill="#8d8fa0"/>
 <g fill="#b5b8c8"><rect x="14" y="142.8" width="0.6" height="1.2"/><rect x="20" y="142.8" width="0.6" height="1.2"/><rect x="26" y="142.8" width="0.6" height="1.2"/><rect x="32" y="142.8" width="0.6" height="1.2"/><rect x="38" y="142.8" width="0.6" height="1.2"/><rect x="44" y="142.8" width="0.6" height="1.2"/><rect x="50" y="142.8" width="0.6" height="1.2"/><rect x="56" y="142.8" width="0.6" height="1.2"/></g>
 <circle cx="35.2" cy="144.7" r="2.6" fill="#6464e0" stroke="#3c3cc0" stroke-width="0.8"/><circle cx="35.2" cy="144.7" r="0.7" fill="#d0d0ff"/>
 <rect x="11" y="164.7" width="49.5" height="0.8" fill="#8d8fa0"/>
 <g fill="#b5b8c8"><rect x="14" y="162.8" width="0.6" height="1.2"/><rect x="20" y="162.8" width="0.6" height="1.2"/><rect x="26" y="162.8" width="0.6" height="1.2"/><rect x="32" y="162.8" width="0.6" height="1.2"/><rect x="38" y="162.8" width="0.6" height="1.2"/><rect x="44" y="162.8" width="0.6" height="1.2"/><rect x="50" y="162.8" width="0.6" height="1.2"/><rect x="56" y="162.8" width="0.6" height="1.2"/></g>
 <circle cx="35.2" cy="164.7" r="2.6" fill="#6464e0" stroke="#3c3cc0" stroke-width="0.8"/><circle cx="35.2" cy="164.7" r="0.7" fill="#d0d0ff"/>
 <path d="M5.9 299.8 H13.1 L9.5 295.9 Z" fill="#111"/>
</svg>
<div class="t" style="left:10.6px;top:155px;font-size:5.6px;color:#222">L</div>
<div class="t" style="left:55.6px;top:155px;font-size:5.6px;color:#222">R</div>
<div class="t" style="left:5.4px;top:176.4px;font-size:7.1px;color:#222">Stereo, 44100Hz</div>
<div class="t" style="left:5.4px;top:183.9px;font-size:7.1px;color:#222">32-bit float</div>

<!-- v scrollbar -->
<div class="a" style="left:896.6px;top:105px;width:11.4px;height:379.4px;background:#f0f0f0"></div>
<div class="a" style="left:897.6px;top:116px;width:9.3px;height:356.6px;background:#cdcdcd"></div>
<!-- h scrollbar -->
<div class="a" style="left:0;top:484.2px;width:908px;height:12.8px;background:#f0f0f0"></div>
<div class="a" style="left:101.4px;top:485.8px;width:783.4px;height:9.2px;background:#cdcdcd"></div>
<svg width="908" height="512" viewBox="0 0 908 512" fill="none" stroke="#505050" stroke-width="1.2">
 <path d="M900.1 112 L902.5 109.4 L904.9 112"/>
 <path d="M900.1 477.6 L902.5 480.2 L904.9 477.6"/>
 <path d="M97.8 488 L95.2 490.5 L97.8 493"/>
 <path d="M889.6 488 L892.2 490.5 L889.6 493"/>
</svg>
<!-- status bar -->
<div class="a" style="left:0;top:496.6px;width:908px;height:15.4px;background:#f0f0f0"></div>
<div class="a" style="left:0;top:495.8px;width:908px;height:1px;background:#fbfbfb"></div>
<div class="a" style="left:6.8px;top:498px;width:0.7px;height:12px;background:#e0e0e0"></div>
<div class="a" style="left:94px;top:498px;width:0.7px;height:12px;background:#e6e6e6"></div>
<div class="a" style="left:0;top:510.5px;width:908px;height:1.5px;background:#333"></div>
<div class="a" style="left:907.2px;top:86px;width:0.8px;height:426px;background:#b8b8b8"></div>
<div class="t" style="left:9.6px;top:500.7px;font-size:8.6px;color:#222;transform:scaleX(.906);transform-origin:0 0">Playing.</div>
<div class="t" style="left:101.2px;top:500.7px;font-size:8.6px;color:#222;transform:scaleX(.896);transform-origin:0 0">Play (Space) / Loop Play (Shift+Space)</div>
<div class="t" style="left:795px;top:500.7px;font-size:8.6px;color:#222;transform:scaleX(.87);transform-origin:0 0">Actual Rate: 48000</div>
</div></body></html>
